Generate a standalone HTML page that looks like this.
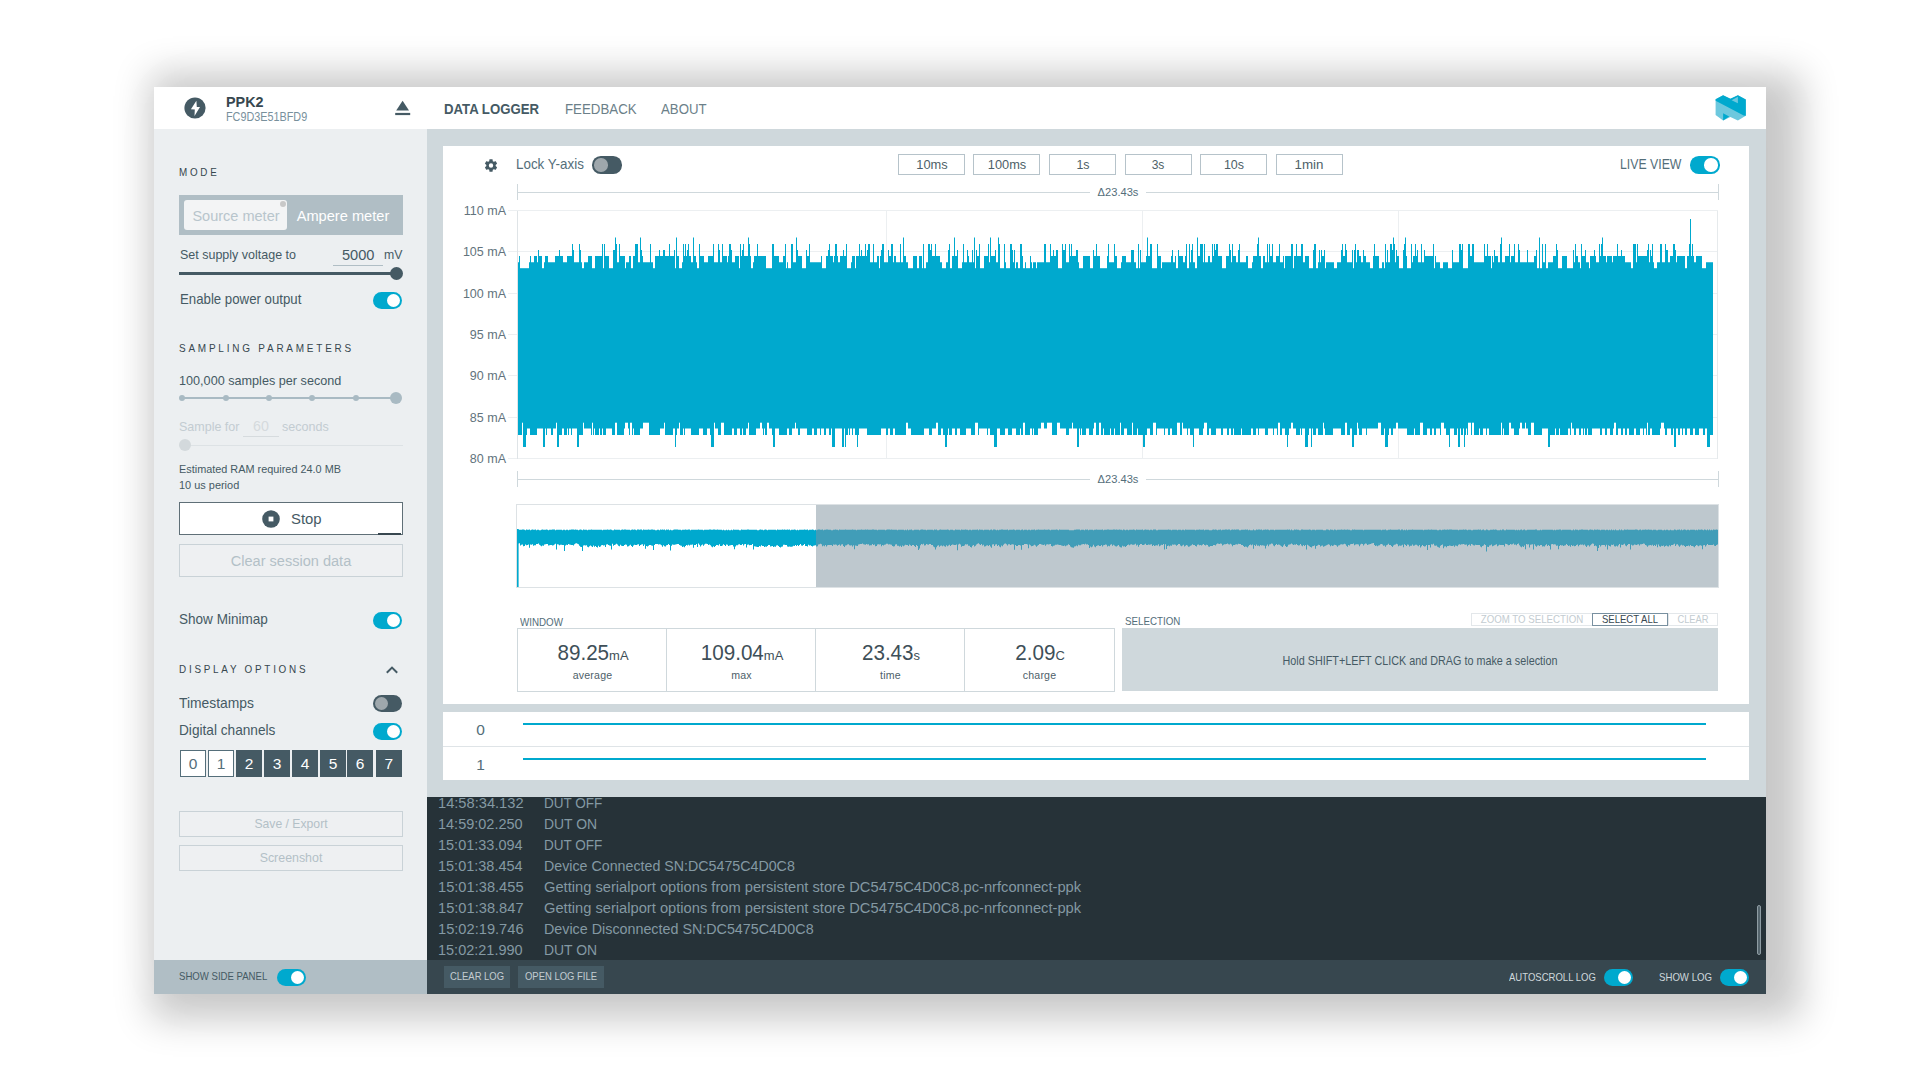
<!DOCTYPE html>
<html><head><meta charset="utf-8"><title>PPK2</title>
<style>
html,body{margin:0;padding:0;width:1920px;height:1080px;overflow:hidden;background:#ffffff;}
body{position:relative;font-family:"Liberation Sans", sans-serif;}
.a{position:absolute;}
.t{position:absolute;white-space:nowrap;}
</style></head><body>
<div class="a" style="left:154px;top:87px;width:1612px;height:907px;background:#fff;box-shadow:16px 6px 35px 20px rgba(0,0,0,0.2), 10px 0px 60px rgba(0,0,0,0.04);"></div>
<div class="a" style="left:154px;top:87px;width:1612px;height:42px;background:#ffffff;"></div>
<div class="a" style="left:154px;top:129px;width:273px;height:831px;background:#eceff1;"></div>
<div class="a" style="left:154px;top:960px;width:273px;height:34px;background:#b0bec5;"></div>
<div class="a" style="left:427px;top:129px;width:1339px;height:668px;background:#cfd8dc;"></div>
<div class="a" style="left:443px;top:146px;width:1306px;height:558px;background:#ffffff;"></div>
<div class="a" style="left:443px;top:712px;width:1306px;height:68px;background:#ffffff;"></div>
<div class="a" style="left:427px;top:797px;width:1339px;height:163px;background:#263238;"></div>
<div class="a" style="left:427px;top:960px;width:1339px;height:34px;background:#37474f;"></div>
<svg class="a" style="left:184px;top:97px" width="22" height="22" viewBox="0 0 22 22">
<circle cx="11" cy="11" r="10.6" fill="#455a64"/>
<path d="M12.4 3.8 L6.9 12.2 L10.8 12.5 L10.5 19 L16 10 L12.8 10 Z" fill="#fff"/></svg>
<div class="t" style="left:226px;top:94.38px;font-size:15.5px;line-height:15.5px;color:#37474f;font-weight:700;transform:scaleX(0.9262);transform-origin:left 0;"><span id="t0" data-m="1">PPK2</span></div>
<div class="t" style="left:226px;top:110.77px;font-size:12.2px;line-height:12.2px;color:#78909c;font-weight:400;transform:scaleX(0.8879);transform-origin:left 0;"><span id="t1" data-m="1">FC9D3E51BFD9</span></div>
<svg class="a" style="left:395px;top:100px" width="16" height="16" viewBox="0 0 16 16">
<path d="M1.2 10.4 L7.6 0.8 L14 10.4 Z" fill="#455a64"/><rect x="0.2" y="12.9" width="15" height="2.2" fill="#455a64"/></svg>
<div class="t" style="left:444.2px;top:101.13px;font-size:15.5px;line-height:15.5px;color:#455a64;font-weight:700;transform:scaleX(0.8511);transform-origin:left 0;"><span id="t2" data-m="1">DATA LOGGER</span></div>
<div class="t" style="left:564.7px;top:101.13px;font-size:15.5px;line-height:15.5px;color:#6c7f89;font-weight:400;transform:scaleX(0.8569);transform-origin:left 0;"><span id="t3" data-m="1">FEEDBACK</span></div>
<div class="t" style="left:661.3px;top:101.13px;font-size:15.5px;line-height:15.5px;color:#6c7f89;font-weight:400;transform:scaleX(0.8530);transform-origin:left 0;"><span id="t4" data-m="1">ABOUT</span></div>
<svg class="a" style="left:1715px;top:95px" width="32" height="27" viewBox="0 0 32 27">
<path d="M0.6 4.2 L8.1 0.2 L15.4 3.8 L22.9 0.2 L30.8 4.6 L30.8 20.8 L22.9 25.6 L15.4 22 L8.1 25.6 L0.6 20 Z" fill="#6dc8de"/>
<path d="M0.6 4.2 L8.1 0.2 L15.4 3.8 L22.9 0.2 L30.8 4.6 L30.8 20.8 L28.7 20.4 L0.6 5.8 Z" fill="#00a9ce"/>
<path d="M16.6 5.2 L22.9 1.8 L22.9 8.2 Z" fill="#6dc8de"/>
<path d="M8.1 18.3 L14.2 21.5 L8.1 25.5 Z" fill="#00a9ce"/>
</svg>
<div class="t" style="left:179px;top:166.76px;font-size:11.5px;line-height:11.5px;color:#37474f;font-weight:400;letter-spacing:3.2px;transform:scaleX(0.8553);transform-origin:left 0;"><span id="t5" data-m="1">MODE</span></div>
<div class="a" style="left:179px;top:195px;width:224px;height:40px;background:#b0bec5;"></div>
<div class="a" style="left:184px;top:200px;width:103px;height:30px;background:#f3f4f5;border-radius:3px;"></div>
<div class="a" style="left:280px;top:201px;width:6px;height:6px;background:#c8c8c8;border-radius:50%;"></div>
<div class="t" style="left:-364.5px;width:1200px;text-align:center;top:208.38px;font-size:15.5px;line-height:15.5px;color:#b8c5cc;font-weight:400;transform:scaleX(0.9367);transform-origin:center 0;"><span id="t6" data-m="1">Source meter</span></div>
<div class="t" style="left:-257.25px;width:1200px;text-align:center;top:208.38px;font-size:15.5px;line-height:15.5px;color:#ffffff;font-weight:400;transform:scaleX(0.9435);transform-origin:center 0;"><span id="t7" data-m="1">Ampere meter</span></div>
<div class="t" style="left:179.6px;top:248.24px;font-size:13.3px;line-height:13.3px;color:#455a64;font-weight:400;transform:scaleX(0.9395);transform-origin:left 0;"><span id="t8" data-m="1">Set supply voltage to</span></div>
<div class="t" style="left:342px;top:246.55px;font-size:15.3px;line-height:15.3px;color:#455a64;font-weight:400;transform:scaleX(0.9546);transform-origin:left 0;"><span id="t9" data-m="1">5000</span></div>
<div class="a" style="left:333px;top:265px;width:50px;height:1px;background:#b0bec5;"></div>
<div class="t" style="left:383.7px;top:248.24px;font-size:13.3px;line-height:13.3px;color:#455a64;font-weight:400;transform:scaleX(0.9215);transform-origin:left 0;"><span id="t10" data-m="1">mV</span></div>
<div class="a" style="left:179px;top:272px;width:218px;height:3px;background:#455a64;"></div>
<div class="a" style="left:390px;top:267px;width:13px;height:13px;background:#455a64;border-radius:50%;"></div>
<div class="t" style="left:180px;top:291.10px;font-size:15px;line-height:15px;color:#455a64;font-weight:400;transform:scaleX(0.8819);transform-origin:left 0;"><span id="t11" data-m="1">Enable power output</span></div>
<div class="a" style="left:373px;top:292px;width:29px;height:17px;background:#00a9ce;border-radius:8.5px;"></div>
<div class="a" style="left:387.0px;top:294px;width:13.0px;height:13.0px;background:#ffffff;border-radius:50%;"></div>
<div class="t" style="left:179px;top:343.26px;font-size:11.5px;line-height:11.5px;color:#37474f;font-weight:400;letter-spacing:3.2px;transform:scaleX(0.8671);transform-origin:left 0;"><span id="t12" data-m="1">SAMPLING PARAMETERS</span></div>
<div class="t" style="left:179px;top:373.54px;font-size:13.3px;line-height:13.3px;color:#455a64;font-weight:400;transform:scaleX(0.9506);transform-origin:left 0;"><span id="t13" data-m="1">100,000 samples per second</span></div>
<div class="a" style="left:182px;top:397px;width:214px;height:2px;background:#a9bac3;"></div>
<div class="a" style="left:179.3px;top:395px;width:6px;height:6px;background:#a9bac3;border-radius:50%;"></div>
<div class="a" style="left:222.7px;top:395px;width:6px;height:6px;background:#a9bac3;border-radius:50%;"></div>
<div class="a" style="left:266px;top:395px;width:6px;height:6px;background:#a9bac3;border-radius:50%;"></div>
<div class="a" style="left:309.3px;top:395px;width:6px;height:6px;background:#a9bac3;border-radius:50%;"></div>
<div class="a" style="left:352.7px;top:395px;width:6px;height:6px;background:#a9bac3;border-radius:50%;"></div>
<div class="a" style="left:390px;top:392px;width:12px;height:12px;background:#a9bac3;border-radius:50%;"></div>
<div class="t" style="left:179px;top:419.54px;font-size:13.3px;line-height:13.3px;color:#c3ccd1;font-weight:400;transform:scaleX(0.9404);transform-origin:left 0;"><span id="t14" data-m="1">Sample for</span></div>
<div class="t" style="left:-338.75px;width:1200px;text-align:center;top:418.10px;font-size:15px;line-height:15px;color:#d5dadd;font-weight:400;transform:scaleX(0.9485);transform-origin:center 0;"><span id="t15" data-m="1">60</span></div>
<div class="a" style="left:243px;top:436px;width:36px;height:1px;background:#d6dbde;"></div>
<div class="t" style="left:282px;top:419.54px;font-size:13.3px;line-height:13.3px;color:#c3ccd1;font-weight:400;transform:scaleX(0.9423);transform-origin:left 0;"><span id="t16" data-m="1">seconds</span></div>
<div class="a" style="left:179px;top:445px;width:224px;height:1px;background:#dde2e5;"></div>
<div class="a" style="left:179px;top:439px;width:12px;height:12px;background:#d3d9dc;border-radius:50%;"></div>
<div class="t" style="left:179px;top:464.02px;font-size:11.2px;line-height:11.2px;color:#455a64;font-weight:400;transform:scaleX(0.9719);transform-origin:left 0;"><span id="t17" data-m="1">Estimated RAM required 24.0 MB</span></div>
<div class="t" style="left:179px;top:480.02px;font-size:11.2px;line-height:11.2px;color:#455a64;font-weight:400;transform:scaleX(0.9779);transform-origin:left 0;"><span id="t18" data-m="1">10 us period</span></div>
<div class="a" style="left:179px;top:502px;width:224px;height:33px;background:#ffffff;border:1px solid #5f6f77;box-sizing:border-box;"></div>
<div class="a" style="left:378px;top:533px;width:23px;height:2px;background:#37474f;"></div>
<svg class="a" style="left:262px;top:510px" width="18" height="18" viewBox="0 0 18 18">
<circle cx="9" cy="9" r="8.8" fill="#455a64"/><rect x="6.6" y="6.6" width="4.8" height="4.8" fill="#fff"/></svg>
<div class="t" style="left:290.7px;top:511.38px;font-size:15.5px;line-height:15.5px;color:#455a64;font-weight:400;transform:scaleX(0.9595);transform-origin:left 0;"><span id="t19" data-m="1">Stop</span></div>
<div class="a" style="left:179px;top:544px;width:224px;height:33px;background:#eef0f2;border:1px solid #c9d2d7;box-sizing:border-box;"></div>
<div class="t" style="left:-309px;width:1200px;text-align:center;top:553.05px;font-size:15.3px;line-height:15.3px;color:#b3c0c7;font-weight:400;transform:scaleX(0.9514);transform-origin:center 0;"><span id="t20" data-m="1">Clear session data</span></div>
<div class="t" style="left:179px;top:611.30px;font-size:15px;line-height:15px;color:#455a64;font-weight:400;transform:scaleX(0.9028);transform-origin:left 0;"><span id="t21" data-m="1">Show Minimap</span></div>
<div class="a" style="left:373px;top:612px;width:29px;height:17px;background:#00a9ce;border-radius:8.5px;"></div>
<div class="a" style="left:387.0px;top:614px;width:13.0px;height:13.0px;background:#ffffff;border-radius:50%;"></div>
<div class="t" style="left:179px;top:663.76px;font-size:11.5px;line-height:11.5px;color:#37474f;font-weight:400;letter-spacing:3.2px;transform:scaleX(0.8592);transform-origin:left 0;"><span id="t22" data-m="1">DISPLAY OPTIONS</span></div>
<svg class="a" style="left:385px;top:664px" width="14" height="12" viewBox="0 0 14 12">
<path d="M1.8 8.8 L7 3.6 L12.2 8.8" fill="none" stroke="#455a64" stroke-width="2"/></svg>
<div class="t" style="left:179px;top:695.00px;font-size:15px;line-height:15px;color:#455a64;font-weight:400;transform:scaleX(0.9241);transform-origin:left 0;"><span id="t23" data-m="1">Timestamps</span></div>
<div class="a" style="left:373px;top:695px;width:29px;height:17px;background:#455a64;border-radius:8.5px;"></div>
<div class="a" style="left:375px;top:697px;width:13.0px;height:13.0px;background:#9ea7ac;border-radius:50%;"></div>
<div class="t" style="left:179px;top:722.40px;font-size:15px;line-height:15px;color:#455a64;font-weight:400;transform:scaleX(0.9100);transform-origin:left 0;"><span id="t24" data-m="1">Digital channels</span></div>
<div class="a" style="left:373px;top:723px;width:29px;height:17px;background:#00a9ce;border-radius:8.5px;"></div>
<div class="a" style="left:387.0px;top:725px;width:13.0px;height:13.0px;background:#ffffff;border-radius:50%;"></div>
<div class="a" style="left:180px;top:750px;width:26px;height:27px;background:#ffffff;border:1px solid #546e7a;box-sizing:border-box;"></div>
<div class="t" style="left:-407px;width:1200px;text-align:center;top:755.78px;font-size:15.5px;line-height:15.5px;color:#546e7a;font-weight:400;"><span id="t25">0</span></div>
<div class="a" style="left:208px;top:750px;width:26px;height:27px;background:#ffffff;border:1px solid #546e7a;box-sizing:border-box;"></div>
<div class="t" style="left:-379px;width:1200px;text-align:center;top:755.78px;font-size:15.5px;line-height:15.5px;color:#546e7a;font-weight:400;"><span id="t26">1</span></div>
<div class="a" style="left:236px;top:750px;width:26px;height:27px;background:#455a64;"></div>
<div class="t" style="left:-351px;width:1200px;text-align:center;top:755.78px;font-size:15.5px;line-height:15.5px;color:#ffffff;font-weight:400;"><span id="t27">2</span></div>
<div class="a" style="left:264px;top:750px;width:26px;height:27px;background:#455a64;"></div>
<div class="t" style="left:-323px;width:1200px;text-align:center;top:755.78px;font-size:15.5px;line-height:15.5px;color:#ffffff;font-weight:400;"><span id="t28">3</span></div>
<div class="a" style="left:292px;top:750px;width:26px;height:27px;background:#455a64;"></div>
<div class="t" style="left:-295px;width:1200px;text-align:center;top:755.78px;font-size:15.5px;line-height:15.5px;color:#ffffff;font-weight:400;"><span id="t29">4</span></div>
<div class="a" style="left:320px;top:750px;width:26px;height:27px;background:#455a64;"></div>
<div class="t" style="left:-267px;width:1200px;text-align:center;top:755.78px;font-size:15.5px;line-height:15.5px;color:#ffffff;font-weight:400;"><span id="t30">5</span></div>
<div class="a" style="left:347px;top:750px;width:26px;height:27px;background:#455a64;"></div>
<div class="t" style="left:-240px;width:1200px;text-align:center;top:755.78px;font-size:15.5px;line-height:15.5px;color:#ffffff;font-weight:400;"><span id="t31">6</span></div>
<div class="a" style="left:375.7px;top:750px;width:26px;height:27px;background:#455a64;"></div>
<div class="t" style="left:-211.3px;width:1200px;text-align:center;top:755.78px;font-size:15.5px;line-height:15.5px;color:#ffffff;font-weight:400;"><span id="t32">7</span></div>
<div class="a" style="left:179px;top:811px;width:224px;height:26px;background:#eef0f2;border:1px solid #c9d2d7;box-sizing:border-box;"></div>
<div class="t" style="left:-309px;width:1200px;text-align:center;top:817.44px;font-size:13.3px;line-height:13.3px;color:#b3c0c7;font-weight:400;transform:scaleX(0.9173);transform-origin:center 0;"><span id="t33" data-m="1">Save / Export</span></div>
<div class="a" style="left:179px;top:845px;width:224px;height:26px;background:#eef0f2;border:1px solid #c9d2d7;box-sizing:border-box;"></div>
<div class="t" style="left:-309px;width:1200px;text-align:center;top:850.74px;font-size:13.3px;line-height:13.3px;color:#b3c0c7;font-weight:400;transform:scaleX(0.9324);transform-origin:center 0;"><span id="t34" data-m="1">Screenshot</span></div>
<div class="t" style="left:179.4px;top:971.43px;font-size:11.3px;line-height:11.3px;color:#455a64;font-weight:400;transform:scaleX(0.8485);transform-origin:left 0;"><span id="t35" data-m="1">SHOW SIDE PANEL</span></div>
<div class="a" style="left:277px;top:969px;width:29px;height:17px;background:#00a9ce;border-radius:8.5px;"></div>
<div class="a" style="left:291.0px;top:971px;width:13.0px;height:13.0px;background:#ffffff;border-radius:50%;"></div>
<svg class="a" style="left:483px;top:158px" width="16" height="15" viewBox="0 0 24 24">
<path fill="#455a64" d="M12,15.5A3.5,3.5 0 0,1 8.5,12A3.5,3.5 0 0,1 12,8.5A3.5,3.5 0 0,1 15.5,12A3.5,3.5 0 0,1 12,15.5M19.43,12.97C19.47,12.65 19.5,12.33 19.5,12C19.5,11.67 19.47,11.34 19.43,11L21.54,9.37C21.73,9.22 21.78,8.95 21.66,8.73L19.66,5.27C19.54,5.05 19.27,4.96 19.05,5.05L16.56,6.05C16.04,5.66 15.5,5.32 14.87,5.07L14.5,2.42C14.46,2.18 14.25,2 14,2H10C9.75,2 9.54,2.18 9.5,2.42L9.13,5.07C8.5,5.32 7.96,5.66 7.44,6.05L4.95,5.05C4.73,4.96 4.46,5.05 4.34,5.27L2.34,8.73C2.21,8.95 2.27,9.22 2.46,9.37L4.57,11C4.53,11.34 4.5,11.67 4.5,12C4.5,12.33 4.53,12.65 4.57,12.97L2.46,14.63C2.27,14.78 2.21,15.05 2.34,15.27L4.34,18.73C4.46,18.95 4.73,19.03 4.95,18.95L7.44,17.94C7.96,18.34 8.5,18.68 9.13,18.93L9.5,21.58C9.54,21.82 9.75,22 10,22H14C14.25,22 14.46,21.82 14.5,21.58L14.87,18.93C15.5,18.67 16.04,18.34 16.56,17.94L19.05,18.95C19.27,19.03 19.54,18.95 19.66,18.73L21.66,15.27C21.78,15.05 21.73,14.78 21.54,14.63L19.43,12.97Z"/></svg>
<div class="t" style="left:516px;top:157.09px;font-size:14.3px;line-height:14.3px;color:#546e7a;font-weight:400;transform:scaleX(0.9380);transform-origin:left 0;"><span id="t36" data-m="1">Lock Y-axis</span></div>
<div class="a" style="left:592px;top:156px;width:30px;height:17.5px;background:#455a64;border-radius:8.75px;"></div>
<div class="a" style="left:594px;top:158px;width:13.5px;height:13.5px;background:#9ea7ac;border-radius:50%;"></div>
<div class="a" style="left:898px;top:154px;width:67px;height:21px;background:#ffffff;border:1px solid #b6c3ca;box-sizing:border-box;"></div>
<div class="t" style="left:331.5px;width:1200px;text-align:center;top:158.24px;font-size:13.3px;line-height:13.3px;color:#4e5f68;font-weight:400;transform:scaleX(0.9650);transform-origin:center 0;"><span id="t37" data-m="1">10ms</span></div>
<div class="a" style="left:973px;top:154px;width:67px;height:21px;background:#ffffff;border:1px solid #b6c3ca;box-sizing:border-box;"></div>
<div class="t" style="left:406.5px;width:1200px;text-align:center;top:158.24px;font-size:13.3px;line-height:13.3px;color:#4e5f68;font-weight:400;transform:scaleX(0.9615);transform-origin:center 0;"><span id="t38" data-m="1">100ms</span></div>
<div class="a" style="left:1049px;top:154px;width:67px;height:21px;background:#ffffff;border:1px solid #b6c3ca;box-sizing:border-box;"></div>
<div class="t" style="left:482.5px;width:1200px;text-align:center;top:158.24px;font-size:13.3px;line-height:13.3px;color:#4e5f68;font-weight:400;transform:scaleX(0.9332);transform-origin:center 0;"><span id="t39" data-m="1">1s</span></div>
<div class="a" style="left:1124.5px;top:154px;width:67px;height:21px;background:#ffffff;border:1px solid #b6c3ca;box-sizing:border-box;"></div>
<div class="t" style="left:558.0px;width:1200px;text-align:center;top:158.24px;font-size:13.3px;line-height:13.3px;color:#4e5f68;font-weight:400;transform:scaleX(0.9031);transform-origin:center 0;"><span id="t40" data-m="1">3s</span></div>
<div class="a" style="left:1200px;top:154px;width:67px;height:21px;background:#ffffff;border:1px solid #b6c3ca;box-sizing:border-box;"></div>
<div class="t" style="left:633.5px;width:1200px;text-align:center;top:158.24px;font-size:13.3px;line-height:13.3px;color:#4e5f68;font-weight:400;transform:scaleX(0.9379);transform-origin:center 0;"><span id="t41" data-m="1">10s</span></div>
<div class="a" style="left:1275.5px;top:154px;width:67px;height:21px;background:#ffffff;border:1px solid #b6c3ca;box-sizing:border-box;"></div>
<div class="t" style="left:709.0px;width:1200px;text-align:center;top:158.24px;font-size:13.3px;line-height:13.3px;color:#4e5f68;font-weight:400;transform:scaleX(1.0027);transform-origin:center 0;"><span id="t42" data-m="1">1min</span></div>
<div class="t" style="left:1620px;top:157.09px;font-size:14.3px;line-height:14.3px;color:#546e7a;font-weight:400;transform:scaleX(0.8590);transform-origin:left 0;"><span id="t43" data-m="1">LIVE VIEW</span></div>
<div class="a" style="left:1689.5px;top:156px;width:30px;height:17.5px;background:#00a9ce;border-radius:8.75px;"></div>
<div class="a" style="left:1704.0px;top:158px;width:13.5px;height:13.5px;background:#ffffff;border-radius:50%;"></div>
<div class="a" style="left:518px;top:192px;width:1200px;height:1px;background:#cfd8dc;"></div>
<div class="a" style="left:517px;top:184px;width:1px;height:16px;background:#cfd8dc;"></div>
<div class="a" style="left:1718px;top:184px;width:1px;height:16px;background:#cfd8dc;"></div>
<div class="a" style="left:1090px;top:186px;width:56px;height:12px;background:#ffffff;"></div>
<div class="t" style="left:517.5px;width:1200px;text-align:center;top:186.76px;font-size:11.5px;line-height:11.5px;color:#546e7a;font-weight:400;transform:scaleX(0.9656);transform-origin:center 0;"><span id="t44" data-m="1">&#916;23.43s</span></div>
<div class="a" style="left:518px;top:479px;width:1200px;height:1px;background:#cfd8dc;"></div>
<div class="a" style="left:517px;top:471px;width:1px;height:16px;background:#cfd8dc;"></div>
<div class="a" style="left:1718px;top:471px;width:1px;height:16px;background:#cfd8dc;"></div>
<div class="a" style="left:1090px;top:473px;width:56px;height:12px;background:#ffffff;"></div>
<div class="t" style="left:517.5px;width:1200px;text-align:center;top:474.26px;font-size:11.5px;line-height:11.5px;color:#546e7a;font-weight:400;transform:scaleX(0.9656);transform-origin:center 0;"><span id="t45" data-m="1">&#916;23.43s</span></div>
<div class="a" style="left:508px;top:210px;width:1210px;height:1px;background:#eceff1;"></div>
<div class="t" style="left:-694.5px;width:1200px;text-align:right;top:203.64px;font-size:13.3px;line-height:13.3px;color:#62737c;font-weight:400;transform:scaleX(0.94);transform-origin:right 0;"><span id="t46">110 mA</span></div>
<div class="a" style="left:508px;top:251px;width:1210px;height:1px;background:#eceff1;"></div>
<div class="t" style="left:-694.5px;width:1200px;text-align:right;top:244.64px;font-size:13.3px;line-height:13.3px;color:#62737c;font-weight:400;transform:scaleX(0.94);transform-origin:right 0;"><span id="t47">105 mA</span></div>
<div class="a" style="left:508px;top:293px;width:1210px;height:1px;background:#eceff1;"></div>
<div class="t" style="left:-694.5px;width:1200px;text-align:right;top:286.64px;font-size:13.3px;line-height:13.3px;color:#62737c;font-weight:400;transform:scaleX(0.94);transform-origin:right 0;"><span id="t48">100 mA</span></div>
<div class="a" style="left:508px;top:334px;width:1210px;height:1px;background:#eceff1;"></div>
<div class="t" style="left:-694.5px;width:1200px;text-align:right;top:327.64px;font-size:13.3px;line-height:13.3px;color:#62737c;font-weight:400;transform:scaleX(0.94);transform-origin:right 0;"><span id="t49">95 mA</span></div>
<div class="a" style="left:508px;top:375px;width:1210px;height:1px;background:#eceff1;"></div>
<div class="t" style="left:-694.5px;width:1200px;text-align:right;top:368.64px;font-size:13.3px;line-height:13.3px;color:#62737c;font-weight:400;transform:scaleX(0.94);transform-origin:right 0;"><span id="t50">90 mA</span></div>
<div class="a" style="left:508px;top:417px;width:1210px;height:1px;background:#eceff1;"></div>
<div class="t" style="left:-694.5px;width:1200px;text-align:right;top:410.64px;font-size:13.3px;line-height:13.3px;color:#62737c;font-weight:400;transform:scaleX(0.94);transform-origin:right 0;"><span id="t51">85 mA</span></div>
<div class="a" style="left:508px;top:458px;width:1210px;height:1px;background:#eceff1;"></div>
<div class="t" style="left:-694.5px;width:1200px;text-align:right;top:451.64px;font-size:13.3px;line-height:13.3px;color:#62737c;font-weight:400;transform:scaleX(0.94);transform-origin:right 0;"><span id="t52">80 mA</span></div>
<div class="a" style="left:886px;top:211px;width:1px;height:248px;background:#eceff1;"></div>
<div class="a" style="left:1142px;top:211px;width:1px;height:248px;background:#eceff1;"></div>
<div class="a" style="left:1398px;top:211px;width:1px;height:248px;background:#eceff1;"></div>
<div class="a" style="left:517px;top:211px;width:1px;height:248px;background:#dfe4e7;"></div>
<div class="a" style="left:1717px;top:211px;width:1px;height:248px;background:#e6eaec;"></div>
<svg class="a" style="left:0;top:0" width="1920" height="1080"><rect x="518" y="268.4" width="1195" height="154" fill="#00a9ce"/><path fill="#00a9ce" d="M518 262.2V434.9h1V262.2zM519 256.1V434.9h1V256.1zM520 268.4V434.9h1V268.4zM521 268.4V434.9h1V268.4zM522 268.4V422.4h1V268.4zM523 268.4V446.9h1V268.4zM524 268.4V446.9h1V268.4zM525 268.4V446.9h1V268.4zM526 268.4V434.9h1V268.4zM527 268.4V428.6h1V268.4zM528 268.4V428.6h1V268.4zM529 262.2V428.6h1V262.2zM530 256.1V434.9h1V256.1zM531 262.2V434.9h1V262.2zM532 262.2V434.9h1V262.2zM533 262.2V434.9h1V262.2zM534 256.1V434.9h1V256.1zM535 256.1V434.9h1V256.1zM536 256.1V434.9h1V256.1zM537 262.2V428.6h1V262.2zM538 250.1V428.6h1V250.1zM539 256.1V428.6h1V256.1zM540 256.1V428.6h1V256.1zM541 256.1V428.6h1V256.1zM542 268.4V428.6h1V268.4zM543 268.4V446.9h1V268.4zM544 262.2V446.9h1V262.2zM545 256.1V428.6h1V256.1zM546 256.1V434.9h1V256.1zM547 256.1V428.6h1V256.1zM548 262.2V428.6h1V262.2zM549 262.2V428.6h1V262.2zM550 262.2V428.6h1V262.2zM551 262.2V434.9h1V262.2zM552 262.2V434.9h1V262.2zM553 262.2V428.6h1V262.2zM554 262.2V428.6h1V262.2zM555 256.1V428.6h1V256.1zM556 256.1V422.4h1V256.1zM557 256.1V446.9h1V256.1zM558 256.1V446.9h1V256.1zM559 250.1V434.9h1V250.1zM560 256.1V434.9h1V256.1zM561 256.1V434.9h1V256.1zM562 256.1V428.6h1V256.1zM563 262.2V428.6h1V262.2zM564 262.2V434.9h1V262.2zM565 262.2V434.9h1V262.2zM566 262.2V434.9h1V262.2zM567 256.1V428.6h1V256.1zM568 256.1V434.9h1V256.1zM569 256.1V428.6h1V256.1zM570 256.1V428.6h1V256.1zM571 256.1V434.9h1V256.1zM572 244.0V428.6h1V244.0zM573 250.1V428.6h1V250.1zM574 262.2V428.6h1V262.2zM575 262.2V428.6h1V262.2zM576 262.2V428.6h1V262.2zM577 262.2V446.9h1V262.2zM578 262.2V446.9h1V262.2zM579 244.0V434.9h1V244.0zM580 250.1V434.9h1V250.1zM581 262.2V434.9h1V262.2zM582 268.4V434.9h1V268.4zM583 268.4V422.4h1V268.4zM584 262.2V428.6h1V262.2zM585 262.2V428.6h1V262.2zM586 262.2V428.6h1V262.2zM587 262.2V428.6h1V262.2zM588 256.1V428.6h1V256.1zM589 256.1V428.6h1V256.1zM590 256.1V428.6h1V256.1zM591 256.1V434.9h1V256.1zM592 268.4V422.4h1V268.4zM593 268.4V434.9h1V268.4zM594 268.4V428.6h1V268.4zM595 256.1V434.9h1V256.1zM596 256.1V434.9h1V256.1zM597 256.1V434.9h1V256.1zM598 256.1V434.9h1V256.1zM599 256.1V428.6h1V256.1zM600 256.1V434.9h1V256.1zM601 256.1V434.9h1V256.1zM602 244.0V428.6h1V244.0zM603 268.4V434.9h1V268.4zM604 244.0V434.9h1V244.0zM605 256.1V434.9h1V256.1zM606 256.1V428.6h1V256.1zM607 256.1V428.6h1V256.1zM608 256.1V428.6h1V256.1zM609 268.4V428.6h1V268.4zM610 268.4V428.6h1V268.4zM611 268.4V428.6h1V268.4zM612 268.4V434.9h1V268.4zM613 250.1V434.9h1V250.1zM614 250.1V434.9h1V250.1zM615 237.5V422.4h1V237.5zM616 244.0V422.4h1V244.0zM617 262.2V434.9h1V262.2zM618 262.2V434.9h1V262.2zM619 244.0V434.9h1V244.0zM620 256.1V434.9h1V256.1zM621 256.1V434.9h1V256.1zM622 256.1V434.9h1V256.1zM623 256.1V434.9h1V256.1zM624 256.1V428.6h1V256.1zM625 268.4V422.4h1V268.4zM626 262.2V422.4h1V262.2zM627 262.2V422.4h1V262.2zM628 262.2V428.6h1V262.2zM629 256.1V434.9h1V256.1zM630 256.1V422.4h1V256.1zM631 268.4V422.4h1V268.4zM632 268.4V434.9h1V268.4zM633 256.1V428.6h1V256.1zM634 256.1V434.9h1V256.1zM635 244.0V434.9h1V244.0zM636 244.0V434.9h1V244.0zM637 244.0V434.9h1V244.0zM638 262.2V434.9h1V262.2zM639 262.2V434.9h1V262.2zM640 237.5V428.6h1V237.5zM641 250.1V428.6h1V250.1zM642 256.1V428.6h1V256.1zM643 262.2V422.4h1V262.2zM644 262.2V422.4h1V262.2zM645 262.2V422.4h1V262.2zM646 262.2V422.4h1V262.2zM647 262.2V422.4h1V262.2zM648 262.2V422.4h1V262.2zM649 262.2V434.9h1V262.2zM650 244.0V434.9h1V244.0zM651 262.2V434.9h1V262.2zM652 262.2V434.9h1V262.2zM653 268.4V434.9h1V268.4zM654 268.4V434.9h1V268.4zM655 256.1V434.9h1V256.1zM656 256.1V434.9h1V256.1zM657 256.1V434.9h1V256.1zM658 256.1V434.9h1V256.1zM659 250.1V434.9h1V250.1zM660 256.1V428.6h1V256.1zM661 256.1V428.6h1V256.1zM662 256.1V428.6h1V256.1zM663 250.1V428.6h1V250.1zM664 250.1V422.4h1V250.1zM665 256.1V434.9h1V256.1zM666 256.1V434.9h1V256.1zM667 256.1V434.9h1V256.1zM668 256.1V434.9h1V256.1zM669 244.0V434.9h1V244.0zM670 256.1V434.9h1V256.1zM671 256.1V434.9h1V256.1zM672 256.1V434.9h1V256.1zM673 256.1V428.6h1V256.1zM674 250.1V428.6h1V250.1zM675 268.4V446.9h1V268.4zM676 237.5V434.9h1V237.5zM677 256.1V428.6h1V256.1zM678 256.1V428.6h1V256.1zM679 268.4V422.4h1V268.4zM680 268.4V434.9h1V268.4zM681 268.4V434.9h1V268.4zM682 262.2V434.9h1V262.2zM683 244.0V428.6h1V244.0zM684 256.1V434.9h1V256.1zM685 244.0V428.6h1V244.0zM686 256.1V428.6h1V256.1zM687 250.1V428.6h1V250.1zM688 244.0V428.6h1V244.0zM689 256.1V428.6h1V256.1zM690 256.1V428.6h1V256.1zM691 262.2V434.9h1V262.2zM692 262.2V434.9h1V262.2zM693 237.5V434.9h1V237.5zM694 256.1V434.9h1V256.1zM695 256.1V434.9h1V256.1zM696 262.2V434.9h1V262.2zM697 268.4V434.9h1V268.4zM698 268.4V434.9h1V268.4zM699 244.0V428.6h1V244.0zM700 256.1V428.6h1V256.1zM701 256.1V428.6h1V256.1zM702 256.1V428.6h1V256.1zM703 256.1V434.9h1V256.1zM704 262.2V434.9h1V262.2zM705 262.2V434.9h1V262.2zM706 262.2V434.9h1V262.2zM707 262.2V428.6h1V262.2zM708 256.1V428.6h1V256.1zM709 256.1V428.6h1V256.1zM710 256.1V434.9h1V256.1zM711 256.1V446.9h1V256.1zM712 256.1V446.9h1V256.1zM713 244.0V446.9h1V244.0zM714 262.2V422.4h1V262.2zM715 262.2V428.6h1V262.2zM716 262.2V428.6h1V262.2zM717 262.2V428.6h1V262.2zM718 244.0V434.9h1V244.0zM719 250.1V434.9h1V250.1zM720 262.2V434.9h1V262.2zM721 262.2V422.4h1V262.2zM722 244.0V422.4h1V244.0zM723 256.1V422.4h1V256.1zM724 256.1V434.9h1V256.1zM725 256.1V434.9h1V256.1zM726 256.1V434.9h1V256.1zM727 262.2V434.9h1V262.2zM728 256.1V434.9h1V256.1zM729 244.0V434.9h1V244.0zM730 244.0V434.9h1V244.0zM731 250.1V434.9h1V250.1zM732 262.2V428.6h1V262.2zM733 262.2V428.6h1V262.2zM734 262.2V434.9h1V262.2zM735 256.1V434.9h1V256.1zM736 256.1V434.9h1V256.1zM737 256.1V428.6h1V256.1zM738 256.1V428.6h1V256.1zM739 268.4V428.6h1V268.4zM740 244.0V434.9h1V244.0zM741 256.1V434.9h1V256.1zM742 250.1V428.6h1V250.1zM743 244.0V434.9h1V244.0zM744 256.1V434.9h1V256.1zM745 256.1V434.9h1V256.1zM746 256.1V428.6h1V256.1zM747 256.1V428.6h1V256.1zM748 237.5V422.4h1V237.5zM749 244.0V434.9h1V244.0zM750 256.1V434.9h1V256.1zM751 268.4V434.9h1V268.4zM752 268.4V434.9h1V268.4zM753 262.2V434.9h1V262.2zM754 256.1V434.9h1V256.1zM755 256.1V434.9h1V256.1zM756 256.1V428.6h1V256.1zM757 244.0V428.6h1V244.0zM758 256.1V428.6h1V256.1zM759 256.1V428.6h1V256.1zM760 256.1V422.4h1V256.1zM761 256.1V422.4h1V256.1zM762 256.1V428.6h1V256.1zM763 256.1V434.9h1V256.1zM764 256.1V428.6h1V256.1zM765 256.1V434.9h1V256.1zM766 268.4V434.9h1V268.4zM767 268.4V422.4h1V268.4zM768 268.4V422.4h1V268.4zM769 268.4V428.6h1V268.4zM770 268.4V428.6h1V268.4zM771 268.4V428.6h1V268.4zM772 244.0V434.9h1V244.0zM773 244.0V446.9h1V244.0zM774 256.1V446.9h1V256.1zM775 256.1V428.6h1V256.1zM776 256.1V428.6h1V256.1zM777 256.1V428.6h1V256.1zM778 256.1V428.6h1V256.1zM779 262.2V434.9h1V262.2zM780 262.2V434.9h1V262.2zM781 262.2V434.9h1V262.2zM782 262.2V434.9h1V262.2zM783 256.1V434.9h1V256.1zM784 256.1V434.9h1V256.1zM785 244.0V434.9h1V244.0zM786 268.4V434.9h1V268.4zM787 262.2V428.6h1V262.2zM788 268.4V428.6h1V268.4zM789 268.4V434.9h1V268.4zM790 268.4V434.9h1V268.4zM791 244.0V434.9h1V244.0zM792 244.0V428.6h1V244.0zM793 262.2V428.6h1V262.2zM794 262.2V428.6h1V262.2zM795 262.2V422.4h1V262.2zM796 237.5V428.6h1V237.5zM797 250.1V428.6h1V250.1zM798 256.1V434.9h1V256.1zM799 256.1V434.9h1V256.1zM800 256.1V428.6h1V256.1zM801 256.1V428.6h1V256.1zM802 268.4V428.6h1V268.4zM803 268.4V428.6h1V268.4zM804 268.4V428.6h1V268.4zM805 268.4V428.6h1V268.4zM806 250.1V428.6h1V250.1zM807 256.1V434.9h1V256.1zM808 256.1V434.9h1V256.1zM809 244.0V434.9h1V244.0zM810 262.2V434.9h1V262.2zM811 262.2V434.9h1V262.2zM812 262.2V428.6h1V262.2zM813 262.2V428.6h1V262.2zM814 262.2V434.9h1V262.2zM815 262.2V434.9h1V262.2zM816 262.2V434.9h1V262.2zM817 262.2V428.6h1V262.2zM818 262.2V428.6h1V262.2zM819 262.2V428.6h1V262.2zM820 262.2V434.9h1V262.2zM821 256.1V428.6h1V256.1zM822 268.4V428.6h1V268.4zM823 268.4V428.6h1V268.4zM824 268.4V434.9h1V268.4zM825 268.4V434.9h1V268.4zM826 256.1V428.6h1V256.1zM827 256.1V428.6h1V256.1zM828 250.1V428.6h1V250.1zM829 244.0V434.9h1V244.0zM830 256.1V434.9h1V256.1zM831 256.1V428.6h1V256.1zM832 256.1V446.9h1V256.1zM833 262.2V446.9h1V262.2zM834 256.1V446.9h1V256.1zM835 244.0V428.6h1V244.0zM836 244.0V428.6h1V244.0zM837 256.1V428.6h1V256.1zM838 262.2V428.6h1V262.2zM839 262.2V428.6h1V262.2zM840 256.1V428.6h1V256.1zM841 256.1V428.6h1V256.1zM842 256.1V446.9h1V256.1zM843 250.1V446.9h1V250.1zM844 256.1V428.6h1V256.1zM845 256.1V446.9h1V256.1zM846 244.0V434.9h1V244.0zM847 268.4V434.9h1V268.4zM848 268.4V428.6h1V268.4zM849 268.4V434.9h1V268.4zM850 268.4V428.6h1V268.4zM851 262.2V428.6h1V262.2zM852 256.1V434.9h1V256.1zM853 256.1V428.6h1V256.1zM854 256.1V428.6h1V256.1zM855 268.4V434.9h1V268.4zM856 256.1V434.9h1V256.1zM857 256.1V446.9h1V256.1zM858 256.1V434.9h1V256.1zM859 244.0V428.6h1V244.0zM860 256.1V428.6h1V256.1zM861 250.1V428.6h1V250.1zM862 256.1V428.6h1V256.1zM863 256.1V428.6h1V256.1zM864 256.1V428.6h1V256.1zM865 244.0V428.6h1V244.0zM866 256.1V428.6h1V256.1zM867 250.1V434.9h1V250.1zM868 244.0V434.9h1V244.0zM869 244.0V434.9h1V244.0zM870 262.2V434.9h1V262.2zM871 262.2V434.9h1V262.2zM872 262.2V434.9h1V262.2zM873 244.0V434.9h1V244.0zM874 262.2V434.9h1V262.2zM875 262.2V434.9h1V262.2zM876 262.2V434.9h1V262.2zM877 256.1V434.9h1V256.1zM878 256.1V434.9h1V256.1zM879 268.4V434.9h1V268.4zM880 256.1V434.9h1V256.1zM881 250.1V428.6h1V250.1zM882 244.0V428.6h1V244.0zM883 244.0V428.6h1V244.0zM884 262.2V428.6h1V262.2zM885 262.2V428.6h1V262.2zM886 262.2V434.9h1V262.2zM887 262.2V434.9h1V262.2zM888 250.1V428.6h1V250.1zM889 256.1V428.6h1V256.1zM890 256.1V434.9h1V256.1zM891 244.0V434.9h1V244.0zM892 244.0V434.9h1V244.0zM893 262.2V428.6h1V262.2zM894 256.1V428.6h1V256.1zM895 256.1V434.9h1V256.1zM896 262.2V434.9h1V262.2zM897 262.2V434.9h1V262.2zM898 262.2V434.9h1V262.2zM899 262.2V434.9h1V262.2zM900 244.0V434.9h1V244.0zM901 262.2V434.9h1V262.2zM902 262.2V434.9h1V262.2zM903 237.5V434.9h1V237.5zM904 256.1V434.9h1V256.1zM905 256.1V434.9h1V256.1zM906 262.2V422.4h1V262.2zM907 262.2V422.4h1V262.2zM908 268.4V428.6h1V268.4zM909 268.4V428.6h1V268.4zM910 268.4V428.6h1V268.4zM911 268.4V434.9h1V268.4zM912 268.4V434.9h1V268.4zM913 256.1V434.9h1V256.1zM914 256.1V434.9h1V256.1zM915 256.1V434.9h1V256.1zM916 256.1V434.9h1V256.1zM917 268.4V434.9h1V268.4zM918 268.4V434.9h1V268.4zM919 256.1V434.9h1V256.1zM920 256.1V434.9h1V256.1zM921 256.1V434.9h1V256.1zM922 268.4V434.9h1V268.4zM923 244.0V434.9h1V244.0zM924 268.4V428.6h1V268.4zM925 268.4V428.6h1V268.4zM926 262.2V428.6h1V262.2zM927 262.2V428.6h1V262.2zM928 244.0V428.6h1V244.0zM929 244.0V434.9h1V244.0zM930 250.1V434.9h1V250.1zM931 244.0V434.9h1V244.0zM932 256.1V428.6h1V256.1zM933 256.1V428.6h1V256.1zM934 256.1V428.6h1V256.1zM935 244.0V428.6h1V244.0zM936 256.1V422.4h1V256.1zM937 256.1V422.4h1V256.1zM938 256.1V434.9h1V256.1zM939 256.1V434.9h1V256.1zM940 262.2V434.9h1V262.2zM941 262.2V428.6h1V262.2zM942 268.4V428.6h1V268.4zM943 268.4V434.9h1V268.4zM944 268.4V434.9h1V268.4zM945 268.4V446.9h1V268.4zM946 262.2V446.9h1V262.2zM947 262.2V434.9h1V262.2zM948 250.1V428.6h1V250.1zM949 244.0V434.9h1V244.0zM950 268.4V434.9h1V268.4zM951 268.4V434.9h1V268.4zM952 256.1V428.6h1V256.1zM953 256.1V428.6h1V256.1zM954 237.5V428.6h1V237.5zM955 256.1V434.9h1V256.1zM956 256.1V434.9h1V256.1zM957 250.1V428.6h1V250.1zM958 268.4V428.6h1V268.4zM959 268.4V428.6h1V268.4zM960 268.4V434.9h1V268.4zM961 268.4V434.9h1V268.4zM962 262.2V434.9h1V262.2zM963 244.0V434.9h1V244.0zM964 262.2V434.9h1V262.2zM965 262.2V434.9h1V262.2zM966 262.2V428.6h1V262.2zM967 250.1V428.6h1V250.1zM968 256.1V428.6h1V256.1zM969 262.2V428.6h1V262.2zM970 262.2V428.6h1V262.2zM971 262.2V434.9h1V262.2zM972 250.1V434.9h1V250.1zM973 262.2V434.9h1V262.2zM974 237.5V434.9h1V237.5zM975 268.4V422.4h1V268.4zM976 250.1V422.4h1V250.1zM977 256.1V422.4h1V256.1zM978 256.1V434.9h1V256.1zM979 244.0V428.6h1V244.0zM980 268.4V428.6h1V268.4zM981 268.4V428.6h1V268.4zM982 268.4V428.6h1V268.4zM983 268.4V428.6h1V268.4zM984 256.1V428.6h1V256.1zM985 256.1V428.6h1V256.1zM986 256.1V428.6h1V256.1zM987 256.1V434.9h1V256.1zM988 244.0V428.6h1V244.0zM989 262.2V428.6h1V262.2zM990 237.5V434.9h1V237.5zM991 256.1V434.9h1V256.1zM992 256.1V434.9h1V256.1zM993 256.1V434.9h1V256.1zM994 256.1V446.9h1V256.1zM995 250.1V446.9h1V250.1zM996 262.2V446.9h1V262.2zM997 262.2V428.6h1V262.2zM998 237.5V428.6h1V237.5zM999 244.0V428.6h1V244.0zM1000 268.4V434.9h1V268.4zM1001 268.4V434.9h1V268.4zM1002 268.4V434.9h1V268.4zM1003 268.4V434.9h1V268.4zM1004 244.0V434.9h1V244.0zM1005 262.2V428.6h1V262.2zM1006 268.4V428.6h1V268.4zM1007 268.4V428.6h1V268.4zM1008 268.4V434.9h1V268.4zM1009 268.4V434.9h1V268.4zM1010 244.0V434.9h1V244.0zM1011 244.0V434.9h1V244.0zM1012 250.1V428.6h1V250.1zM1013 262.2V428.6h1V262.2zM1014 250.1V428.6h1V250.1zM1015 268.4V428.6h1V268.4zM1016 262.2V434.9h1V262.2zM1017 262.2V434.9h1V262.2zM1018 268.4V434.9h1V268.4zM1019 268.4V434.9h1V268.4zM1020 244.0V428.6h1V244.0zM1021 244.0V434.9h1V244.0zM1022 256.1V434.9h1V256.1zM1023 268.4V422.4h1V268.4zM1024 268.4V422.4h1V268.4zM1025 262.2V434.9h1V262.2zM1026 268.4V434.9h1V268.4zM1027 268.4V434.9h1V268.4zM1028 268.4V434.9h1V268.4zM1029 268.4V434.9h1V268.4zM1030 256.1V428.6h1V256.1zM1031 262.2V428.6h1V262.2zM1032 268.4V434.9h1V268.4zM1033 262.2V428.6h1V262.2zM1034 262.2V434.9h1V262.2zM1035 262.2V434.9h1V262.2zM1036 268.4V434.9h1V268.4zM1037 262.2V434.9h1V262.2zM1038 262.2V428.6h1V262.2zM1039 262.2V428.6h1V262.2zM1040 262.2V428.6h1V262.2zM1041 262.2V422.4h1V262.2zM1042 262.2V422.4h1V262.2zM1043 262.2V422.4h1V262.2zM1044 244.0V428.6h1V244.0zM1045 244.0V428.6h1V244.0zM1046 262.2V428.6h1V262.2zM1047 262.2V422.4h1V262.2zM1048 262.2V422.4h1V262.2zM1049 262.2V422.4h1V262.2zM1050 244.0V422.4h1V244.0zM1051 256.1V422.4h1V256.1zM1052 256.1V434.9h1V256.1zM1053 250.1V434.9h1V250.1zM1054 256.1V434.9h1V256.1zM1055 256.1V434.9h1V256.1zM1056 250.1V434.9h1V250.1zM1057 250.1V422.4h1V250.1zM1058 268.4V422.4h1V268.4zM1059 268.4V422.4h1V268.4zM1060 268.4V428.6h1V268.4zM1061 268.4V428.6h1V268.4zM1062 244.0V428.6h1V244.0zM1063 250.1V428.6h1V250.1zM1064 250.1V428.6h1V250.1zM1065 244.0V428.6h1V244.0zM1066 262.2V434.9h1V262.2zM1067 262.2V434.9h1V262.2zM1068 262.2V434.9h1V262.2zM1069 244.0V428.6h1V244.0zM1070 256.1V428.6h1V256.1zM1071 244.0V428.6h1V244.0zM1072 256.1V422.4h1V256.1zM1073 256.1V428.6h1V256.1zM1074 256.1V428.6h1V256.1zM1075 256.1V428.6h1V256.1zM1076 250.1V428.6h1V250.1zM1077 250.1V446.9h1V250.1zM1078 262.2V446.9h1V262.2zM1079 268.4V428.6h1V268.4zM1080 268.4V434.9h1V268.4zM1081 268.4V428.6h1V268.4zM1082 268.4V434.9h1V268.4zM1083 256.1V434.9h1V256.1zM1084 256.1V434.9h1V256.1zM1085 256.1V434.9h1V256.1zM1086 256.1V428.6h1V256.1zM1087 256.1V428.6h1V256.1zM1088 256.1V428.6h1V256.1zM1089 256.1V434.9h1V256.1zM1090 268.4V434.9h1V268.4zM1091 268.4V434.9h1V268.4zM1092 268.4V434.9h1V268.4zM1093 250.1V428.6h1V250.1zM1094 256.1V422.4h1V256.1zM1095 256.1V422.4h1V256.1zM1096 244.0V434.9h1V244.0zM1097 256.1V434.9h1V256.1zM1098 256.1V434.9h1V256.1zM1099 256.1V422.4h1V256.1zM1100 268.4V422.4h1V268.4zM1101 268.4V434.9h1V268.4zM1102 268.4V434.9h1V268.4zM1103 268.4V428.6h1V268.4zM1104 268.4V434.9h1V268.4zM1105 268.4V434.9h1V268.4zM1106 268.4V434.9h1V268.4zM1107 256.1V434.9h1V256.1zM1108 244.0V434.9h1V244.0zM1109 262.2V434.9h1V262.2zM1110 262.2V428.6h1V262.2zM1111 262.2V434.9h1V262.2zM1112 262.2V434.9h1V262.2zM1113 262.2V434.9h1V262.2zM1114 244.0V428.6h1V244.0zM1115 256.1V434.9h1V256.1zM1116 256.1V434.9h1V256.1zM1117 268.4V434.9h1V268.4zM1118 268.4V434.9h1V268.4zM1119 268.4V434.9h1V268.4zM1120 268.4V422.4h1V268.4zM1121 262.2V434.9h1V262.2zM1122 256.1V434.9h1V256.1zM1123 256.1V434.9h1V256.1zM1124 256.1V428.6h1V256.1zM1125 256.1V428.6h1V256.1zM1126 262.2V428.6h1V262.2zM1127 262.2V434.9h1V262.2zM1128 262.2V434.9h1V262.2zM1129 262.2V434.9h1V262.2zM1130 262.2V434.9h1V262.2zM1131 250.1V434.9h1V250.1zM1132 250.1V422.4h1V250.1zM1133 250.1V434.9h1V250.1zM1134 262.2V434.9h1V262.2zM1135 262.2V434.9h1V262.2zM1136 268.4V434.9h1V268.4zM1137 268.4V428.6h1V268.4zM1138 244.0V434.9h1V244.0zM1139 268.4V434.9h1V268.4zM1140 250.1V434.9h1V250.1zM1141 262.2V434.9h1V262.2zM1142 262.2V434.9h1V262.2zM1143 262.2V446.9h1V262.2zM1144 262.2V446.9h1V262.2zM1145 262.2V434.9h1V262.2zM1146 256.1V434.9h1V256.1zM1147 237.5V428.6h1V237.5zM1148 256.1V428.6h1V256.1zM1149 256.1V428.6h1V256.1zM1150 244.0V434.9h1V244.0zM1151 244.0V434.9h1V244.0zM1152 268.4V434.9h1V268.4zM1153 268.4V422.4h1V268.4zM1154 268.4V422.4h1V268.4zM1155 268.4V422.4h1V268.4zM1156 268.4V434.9h1V268.4zM1157 244.0V428.6h1V244.0zM1158 256.1V428.6h1V256.1zM1159 256.1V428.6h1V256.1zM1160 256.1V428.6h1V256.1zM1161 268.4V428.6h1V268.4zM1162 262.2V428.6h1V262.2zM1163 262.2V428.6h1V262.2zM1164 262.2V434.9h1V262.2zM1165 262.2V428.6h1V262.2zM1166 262.2V428.6h1V262.2zM1167 262.2V428.6h1V262.2zM1168 262.2V434.9h1V262.2zM1169 262.2V434.9h1V262.2zM1170 262.2V428.6h1V262.2zM1171 256.1V428.6h1V256.1zM1172 250.1V434.9h1V250.1zM1173 262.2V434.9h1V262.2zM1174 262.2V434.9h1V262.2zM1175 256.1V434.9h1V256.1zM1176 268.4V434.9h1V268.4zM1177 268.4V422.4h1V268.4zM1178 250.1V422.4h1V250.1zM1179 256.1V422.4h1V256.1zM1180 256.1V434.9h1V256.1zM1181 256.1V434.9h1V256.1zM1182 256.1V422.4h1V256.1zM1183 262.2V428.6h1V262.2zM1184 262.2V428.6h1V262.2zM1185 256.1V428.6h1V256.1zM1186 244.0V428.6h1V244.0zM1187 268.4V434.9h1V268.4zM1188 268.4V428.6h1V268.4zM1189 244.0V428.6h1V244.0zM1190 262.2V434.9h1V262.2zM1191 250.1V434.9h1V250.1zM1192 244.0V434.9h1V244.0zM1193 262.2V446.9h1V262.2zM1194 262.2V428.6h1V262.2zM1195 268.4V428.6h1V268.4zM1196 268.4V428.6h1V268.4zM1197 237.5V428.6h1V237.5zM1198 256.1V428.6h1V256.1zM1199 256.1V434.9h1V256.1zM1200 244.0V434.9h1V244.0zM1201 244.0V434.9h1V244.0zM1202 244.0V434.9h1V244.0zM1203 262.2V428.6h1V262.2zM1204 244.0V422.4h1V244.0zM1205 262.2V422.4h1V262.2zM1206 262.2V422.4h1V262.2zM1207 262.2V434.9h1V262.2zM1208 256.1V434.9h1V256.1zM1209 256.1V428.6h1V256.1zM1210 262.2V428.6h1V262.2zM1211 262.2V434.9h1V262.2zM1212 244.0V434.9h1V244.0zM1213 256.1V434.9h1V256.1zM1214 244.0V434.9h1V244.0zM1215 250.1V434.9h1V250.1zM1216 244.0V428.6h1V244.0zM1217 244.0V428.6h1V244.0zM1218 256.1V428.6h1V256.1zM1219 256.1V428.6h1V256.1zM1220 256.1V428.6h1V256.1zM1221 256.1V434.9h1V256.1zM1222 268.4V434.9h1V268.4zM1223 268.4V428.6h1V268.4zM1224 268.4V428.6h1V268.4zM1225 268.4V428.6h1V268.4zM1226 256.1V428.6h1V256.1zM1227 256.1V434.9h1V256.1zM1228 256.1V434.9h1V256.1zM1229 244.0V428.6h1V244.0zM1230 250.1V428.6h1V250.1zM1231 262.2V434.9h1V262.2zM1232 244.0V434.9h1V244.0zM1233 256.1V428.6h1V256.1zM1234 256.1V434.9h1V256.1zM1235 256.1V434.9h1V256.1zM1236 262.2V434.9h1V262.2zM1237 262.2V434.9h1V262.2zM1238 250.1V434.9h1V250.1zM1239 244.0V434.9h1V244.0zM1240 262.2V434.9h1V262.2zM1241 262.2V428.6h1V262.2zM1242 262.2V434.9h1V262.2zM1243 262.2V434.9h1V262.2zM1244 262.2V434.9h1V262.2zM1245 262.2V434.9h1V262.2zM1246 256.1V434.9h1V256.1zM1247 256.1V434.9h1V256.1zM1248 268.4V434.9h1V268.4zM1249 268.4V434.9h1V268.4zM1250 268.4V434.9h1V268.4zM1251 268.4V428.6h1V268.4zM1252 262.2V428.6h1V262.2zM1253 256.1V434.9h1V256.1zM1254 256.1V434.9h1V256.1zM1255 256.1V434.9h1V256.1zM1256 256.1V428.6h1V256.1zM1257 244.0V428.6h1V244.0zM1258 237.5V434.9h1V237.5zM1259 256.1V428.6h1V256.1zM1260 256.1V428.6h1V256.1zM1261 268.4V428.6h1V268.4zM1262 268.4V428.6h1V268.4zM1263 256.1V428.6h1V256.1zM1264 256.1V428.6h1V256.1zM1265 262.2V434.9h1V262.2zM1266 262.2V434.9h1V262.2zM1267 244.0V434.9h1V244.0zM1268 262.2V428.6h1V262.2zM1269 244.0V428.6h1V244.0zM1270 256.1V428.6h1V256.1zM1271 256.1V428.6h1V256.1zM1272 244.0V428.6h1V244.0zM1273 262.2V434.9h1V262.2zM1274 262.2V428.6h1V262.2zM1275 262.2V428.6h1V262.2zM1276 256.1V428.6h1V256.1zM1277 256.1V434.9h1V256.1zM1278 256.1V422.4h1V256.1zM1279 244.0V422.4h1V244.0zM1280 262.2V434.9h1V262.2zM1281 262.2V434.9h1V262.2zM1282 262.2V428.6h1V262.2zM1283 256.1V428.6h1V256.1zM1284 268.4V428.6h1V268.4zM1285 256.1V434.9h1V256.1zM1286 256.1V434.9h1V256.1zM1287 256.1V446.9h1V256.1zM1288 256.1V434.9h1V256.1zM1289 256.1V428.6h1V256.1zM1290 256.1V428.6h1V256.1zM1291 244.0V422.4h1V244.0zM1292 244.0V422.4h1V244.0zM1293 268.4V428.6h1V268.4zM1294 256.1V428.6h1V256.1zM1295 256.1V428.6h1V256.1zM1296 244.0V434.9h1V244.0zM1297 256.1V434.9h1V256.1zM1298 256.1V434.9h1V256.1zM1299 256.1V434.9h1V256.1zM1300 256.1V428.6h1V256.1zM1301 244.0V434.9h1V244.0zM1302 244.0V428.6h1V244.0zM1303 262.2V428.6h1V262.2zM1304 262.2V428.6h1V262.2zM1305 256.1V446.9h1V256.1zM1306 256.1V446.9h1V256.1zM1307 256.1V446.9h1V256.1zM1308 256.1V434.9h1V256.1zM1309 268.4V428.6h1V268.4zM1310 268.4V428.6h1V268.4zM1311 268.4V446.9h1V268.4zM1312 268.4V428.6h1V268.4zM1313 250.1V434.9h1V250.1zM1314 244.0V434.9h1V244.0zM1315 244.0V434.9h1V244.0zM1316 268.4V428.6h1V268.4zM1317 268.4V428.6h1V268.4zM1318 262.2V434.9h1V262.2zM1319 250.1V434.9h1V250.1zM1320 262.2V434.9h1V262.2zM1321 250.1V434.9h1V250.1zM1322 256.1V434.9h1V256.1zM1323 256.1V422.4h1V256.1zM1324 250.1V428.6h1V250.1zM1325 268.4V434.9h1V268.4zM1326 262.2V434.9h1V262.2zM1327 262.2V434.9h1V262.2zM1328 262.2V434.9h1V262.2zM1329 262.2V434.9h1V262.2zM1330 262.2V434.9h1V262.2zM1331 262.2V434.9h1V262.2zM1332 262.2V434.9h1V262.2zM1333 262.2V428.6h1V262.2zM1334 268.4V428.6h1V268.4zM1335 268.4V428.6h1V268.4zM1336 268.4V428.6h1V268.4zM1337 262.2V428.6h1V262.2zM1338 262.2V428.6h1V262.2zM1339 262.2V428.6h1V262.2zM1340 262.2V428.6h1V262.2zM1341 250.1V434.9h1V250.1zM1342 244.0V434.9h1V244.0zM1343 256.1V434.9h1V256.1zM1344 256.1V434.9h1V256.1zM1345 244.0V422.4h1V244.0zM1346 250.1V422.4h1V250.1zM1347 262.2V434.9h1V262.2zM1348 262.2V434.9h1V262.2zM1349 262.2V434.9h1V262.2zM1350 262.2V428.6h1V262.2zM1351 262.2V428.6h1V262.2zM1352 250.1V446.9h1V250.1zM1353 268.4V446.9h1V268.4zM1354 250.1V434.9h1V250.1zM1355 244.0V434.9h1V244.0zM1356 262.2V434.9h1V262.2zM1357 250.1V422.4h1V250.1zM1358 250.1V428.6h1V250.1zM1359 256.1V434.9h1V256.1zM1360 256.1V434.9h1V256.1zM1361 262.2V434.9h1V262.2zM1362 262.2V428.6h1V262.2zM1363 250.1V428.6h1V250.1zM1364 256.1V428.6h1V256.1zM1365 256.1V428.6h1V256.1zM1366 262.2V434.9h1V262.2zM1367 262.2V428.6h1V262.2zM1368 262.2V428.6h1V262.2zM1369 262.2V428.6h1V262.2zM1370 268.4V428.6h1V268.4zM1371 268.4V428.6h1V268.4zM1372 268.4V428.6h1V268.4zM1373 256.1V428.6h1V256.1zM1374 244.0V428.6h1V244.0zM1375 256.1V428.6h1V256.1zM1376 256.1V428.6h1V256.1zM1377 256.1V428.6h1V256.1zM1378 256.1V422.4h1V256.1zM1379 268.4V422.4h1V268.4zM1380 268.4V422.4h1V268.4zM1381 268.4V434.9h1V268.4zM1382 262.2V434.9h1V262.2zM1383 262.2V434.9h1V262.2zM1384 268.4V428.6h1V268.4zM1385 244.0V446.9h1V244.0zM1386 262.2V446.9h1V262.2zM1387 250.1V446.9h1V250.1zM1388 262.2V434.9h1V262.2zM1389 262.2V428.6h1V262.2zM1390 244.0V428.6h1V244.0zM1391 244.0V434.9h1V244.0zM1392 250.1V434.9h1V250.1zM1393 237.5V428.6h1V237.5zM1394 244.0V428.6h1V244.0zM1395 262.2V428.6h1V262.2zM1396 250.1V422.4h1V250.1zM1397 256.1V422.4h1V256.1zM1398 256.1V428.6h1V256.1zM1399 268.4V428.6h1V268.4zM1400 268.4V428.6h1V268.4zM1401 268.4V428.6h1V268.4zM1402 268.4V428.6h1V268.4zM1403 250.1V428.6h1V250.1zM1404 244.0V428.6h1V244.0zM1405 237.5V428.6h1V237.5zM1406 256.1V428.6h1V256.1zM1407 268.4V434.9h1V268.4zM1408 268.4V434.9h1V268.4zM1409 268.4V434.9h1V268.4zM1410 268.4V434.9h1V268.4zM1411 244.0V434.9h1V244.0zM1412 262.2V434.9h1V262.2zM1413 256.1V434.9h1V256.1zM1414 256.1V428.6h1V256.1zM1415 244.0V434.9h1V244.0zM1416 256.1V434.9h1V256.1zM1417 250.1V434.9h1V250.1zM1418 262.2V434.9h1V262.2zM1419 262.2V434.9h1V262.2zM1420 262.2V422.4h1V262.2zM1421 244.0V422.4h1V244.0zM1422 262.2V422.4h1V262.2zM1423 262.2V434.9h1V262.2zM1424 250.1V434.9h1V250.1zM1425 256.1V434.9h1V256.1zM1426 256.1V434.9h1V256.1zM1427 256.1V428.6h1V256.1zM1428 256.1V428.6h1V256.1zM1429 256.1V428.6h1V256.1zM1430 256.1V434.9h1V256.1zM1431 256.1V434.9h1V256.1zM1432 256.1V428.6h1V256.1zM1433 244.0V428.6h1V244.0zM1434 268.4V434.9h1V268.4zM1435 256.1V434.9h1V256.1zM1436 262.2V428.6h1V262.2zM1437 262.2V428.6h1V262.2zM1438 262.2V428.6h1V262.2zM1439 262.2V428.6h1V262.2zM1440 268.4V434.9h1V268.4zM1441 268.4V422.4h1V268.4zM1442 268.4V422.4h1V268.4zM1443 262.2V422.4h1V262.2zM1444 262.2V428.6h1V262.2zM1445 262.2V428.6h1V262.2zM1446 262.2V434.9h1V262.2zM1447 262.2V434.9h1V262.2zM1448 268.4V434.9h1V268.4zM1449 268.4V446.9h1V268.4zM1450 268.4V428.6h1V268.4zM1451 268.4V428.6h1V268.4zM1452 250.1V428.6h1V250.1zM1453 262.2V428.6h1V262.2zM1454 262.2V434.9h1V262.2zM1455 262.2V434.9h1V262.2zM1456 262.2V434.9h1V262.2zM1457 262.2V428.6h1V262.2zM1458 262.2V446.9h1V262.2zM1459 244.0V446.9h1V244.0zM1460 244.0V428.6h1V244.0zM1461 250.1V434.9h1V250.1zM1462 244.0V434.9h1V244.0zM1463 268.4V428.6h1V268.4zM1464 268.4V446.9h1V268.4zM1465 268.4V434.9h1V268.4zM1466 268.4V428.6h1V268.4zM1467 268.4V434.9h1V268.4zM1468 244.0V422.4h1V244.0zM1469 244.0V422.4h1V244.0zM1470 256.1V422.4h1V256.1zM1471 256.1V434.9h1V256.1zM1472 244.0V422.4h1V244.0zM1473 244.0V422.4h1V244.0zM1474 262.2V434.9h1V262.2zM1475 262.2V434.9h1V262.2zM1476 262.2V434.9h1V262.2zM1477 262.2V434.9h1V262.2zM1478 262.2V434.9h1V262.2zM1479 262.2V428.6h1V262.2zM1480 262.2V434.9h1V262.2zM1481 262.2V434.9h1V262.2zM1482 262.2V434.9h1V262.2zM1483 262.2V428.6h1V262.2zM1484 244.0V428.6h1V244.0zM1485 256.1V428.6h1V256.1zM1486 256.1V434.9h1V256.1zM1487 244.0V428.6h1V244.0zM1488 256.1V428.6h1V256.1zM1489 256.1V434.9h1V256.1zM1490 256.1V434.9h1V256.1zM1491 268.4V434.9h1V268.4zM1492 256.1V434.9h1V256.1zM1493 262.2V434.9h1V262.2zM1494 250.1V434.9h1V250.1zM1495 256.1V434.9h1V256.1zM1496 256.1V434.9h1V256.1zM1497 256.1V434.9h1V256.1zM1498 262.2V434.9h1V262.2zM1499 262.2V434.9h1V262.2zM1500 244.0V434.9h1V244.0zM1501 237.5V422.4h1V237.5zM1502 262.2V434.9h1V262.2zM1503 262.2V428.6h1V262.2zM1504 262.2V434.9h1V262.2zM1505 256.1V434.9h1V256.1zM1506 256.1V434.9h1V256.1zM1507 256.1V434.9h1V256.1zM1508 256.1V434.9h1V256.1zM1509 244.0V422.4h1V244.0zM1510 262.2V422.4h1V262.2zM1511 256.1V428.6h1V256.1zM1512 256.1V428.6h1V256.1zM1513 256.1V428.6h1V256.1zM1514 244.0V434.9h1V244.0zM1515 262.2V434.9h1V262.2zM1516 262.2V434.9h1V262.2zM1517 262.2V434.9h1V262.2zM1518 244.0V434.9h1V244.0zM1519 250.1V428.6h1V250.1zM1520 262.2V422.4h1V262.2zM1521 262.2V422.4h1V262.2zM1522 262.2V428.6h1V262.2zM1523 262.2V428.6h1V262.2zM1524 262.2V428.6h1V262.2zM1525 262.2V422.4h1V262.2zM1526 262.2V428.6h1V262.2zM1527 250.1V428.6h1V250.1zM1528 262.2V434.9h1V262.2zM1529 262.2V434.9h1V262.2zM1530 262.2V434.9h1V262.2zM1531 262.2V422.4h1V262.2zM1532 262.2V422.4h1V262.2zM1533 262.2V422.4h1V262.2zM1534 256.1V434.9h1V256.1zM1535 256.1V434.9h1V256.1zM1536 250.1V434.9h1V250.1zM1537 268.4V434.9h1V268.4zM1538 268.4V434.9h1V268.4zM1539 237.5V434.9h1V237.5zM1540 268.4V434.9h1V268.4zM1541 268.4V434.9h1V268.4zM1542 244.0V428.6h1V244.0zM1543 262.2V428.6h1V262.2zM1544 262.2V428.6h1V262.2zM1545 244.0V428.6h1V244.0zM1546 268.4V428.6h1V268.4zM1547 268.4V428.6h1V268.4zM1548 262.2V446.9h1V262.2zM1549 262.2V446.9h1V262.2zM1550 262.2V434.9h1V262.2zM1551 262.2V434.9h1V262.2zM1552 262.2V434.9h1V262.2zM1553 256.1V434.9h1V256.1zM1554 256.1V434.9h1V256.1zM1555 256.1V428.6h1V256.1zM1556 244.0V434.9h1V244.0zM1557 250.1V434.9h1V250.1zM1558 268.4V434.9h1V268.4zM1559 268.4V428.6h1V268.4zM1560 268.4V434.9h1V268.4zM1561 268.4V434.9h1V268.4zM1562 256.1V434.9h1V256.1zM1563 256.1V434.9h1V256.1zM1564 256.1V434.9h1V256.1zM1565 256.1V434.9h1V256.1zM1566 256.1V434.9h1V256.1zM1567 268.4V434.9h1V268.4zM1568 268.4V428.6h1V268.4zM1569 268.4V428.6h1V268.4zM1570 268.4V434.9h1V268.4zM1571 268.4V422.4h1V268.4zM1572 268.4V428.6h1V268.4zM1573 250.1V428.6h1V250.1zM1574 262.2V434.9h1V262.2zM1575 244.0V434.9h1V244.0zM1576 256.1V428.6h1V256.1zM1577 256.1V428.6h1V256.1zM1578 262.2V428.6h1V262.2zM1579 262.2V434.9h1V262.2zM1580 268.4V434.9h1V268.4zM1581 244.0V428.6h1V244.0zM1582 256.1V428.6h1V256.1zM1583 256.1V434.9h1V256.1zM1584 256.1V428.6h1V256.1zM1585 250.1V434.9h1V250.1zM1586 262.2V434.9h1V262.2zM1587 262.2V428.6h1V262.2zM1588 262.2V434.9h1V262.2zM1589 268.4V434.9h1V268.4zM1590 256.1V434.9h1V256.1zM1591 256.1V434.9h1V256.1zM1592 256.1V428.6h1V256.1zM1593 256.1V428.6h1V256.1zM1594 250.1V428.6h1V250.1zM1595 256.1V428.6h1V256.1zM1596 262.2V428.6h1V262.2zM1597 262.2V428.6h1V262.2zM1598 262.2V428.6h1V262.2zM1599 244.0V428.6h1V244.0zM1600 256.1V434.9h1V256.1zM1601 244.0V434.9h1V244.0zM1602 237.5V428.6h1V237.5zM1603 256.1V428.6h1V256.1zM1604 256.1V428.6h1V256.1zM1605 256.1V434.9h1V256.1zM1606 262.2V434.9h1V262.2zM1607 256.1V428.6h1V256.1zM1608 256.1V428.6h1V256.1zM1609 256.1V428.6h1V256.1zM1610 256.1V434.9h1V256.1zM1611 256.1V434.9h1V256.1zM1612 262.2V434.9h1V262.2zM1613 256.1V428.6h1V256.1zM1614 256.1V422.4h1V256.1zM1615 256.1V422.4h1V256.1zM1616 256.1V434.9h1V256.1zM1617 244.0V434.9h1V244.0zM1618 256.1V428.6h1V256.1zM1619 256.1V428.6h1V256.1zM1620 256.1V428.6h1V256.1zM1621 250.1V434.9h1V250.1zM1622 256.1V434.9h1V256.1zM1623 256.1V428.6h1V256.1zM1624 256.1V428.6h1V256.1zM1625 262.2V434.9h1V262.2zM1626 262.2V434.9h1V262.2zM1627 262.2V428.6h1V262.2zM1628 262.2V428.6h1V262.2zM1629 262.2V434.9h1V262.2zM1630 262.2V434.9h1V262.2zM1631 268.4V434.9h1V268.4zM1632 268.4V434.9h1V268.4zM1633 244.0V434.9h1V244.0zM1634 244.0V428.6h1V244.0zM1635 244.0V428.6h1V244.0zM1636 262.2V434.9h1V262.2zM1637 244.0V434.9h1V244.0zM1638 256.1V434.9h1V256.1zM1639 256.1V434.9h1V256.1zM1640 256.1V428.6h1V256.1zM1641 256.1V428.6h1V256.1zM1642 256.1V428.6h1V256.1zM1643 256.1V434.9h1V256.1zM1644 256.1V428.6h1V256.1zM1645 256.1V428.6h1V256.1zM1646 256.1V434.9h1V256.1zM1647 250.1V422.4h1V250.1zM1648 244.0V434.9h1V244.0zM1649 262.2V434.9h1V262.2zM1650 250.1V428.6h1V250.1zM1651 256.1V428.6h1V256.1zM1652 244.0V434.9h1V244.0zM1653 262.2V434.9h1V262.2zM1654 268.4V434.9h1V268.4zM1655 268.4V434.9h1V268.4zM1656 268.4V434.9h1V268.4zM1657 262.2V434.9h1V262.2zM1658 262.2V434.9h1V262.2zM1659 262.2V434.9h1V262.2zM1660 244.0V428.6h1V244.0zM1661 244.0V422.4h1V244.0zM1662 262.2V422.4h1V262.2zM1663 262.2V422.4h1V262.2zM1664 262.2V428.6h1V262.2zM1665 244.0V434.9h1V244.0zM1666 250.1V434.9h1V250.1zM1667 250.1V428.6h1V250.1zM1668 262.2V428.6h1V262.2zM1669 262.2V428.6h1V262.2zM1670 256.1V428.6h1V256.1zM1671 256.1V434.9h1V256.1zM1672 256.1V434.9h1V256.1zM1673 244.0V428.6h1V244.0zM1674 244.0V446.9h1V244.0zM1675 250.1V446.9h1V250.1zM1676 262.2V428.6h1V262.2zM1677 256.1V428.6h1V256.1zM1678 256.1V434.9h1V256.1zM1679 256.1V434.9h1V256.1zM1680 256.1V428.6h1V256.1zM1681 256.1V428.6h1V256.1zM1682 256.1V434.9h1V256.1zM1683 256.1V428.6h1V256.1zM1684 256.1V428.6h1V256.1zM1685 268.4V434.9h1V268.4zM1686 268.4V434.9h1V268.4zM1687 256.1V428.6h1V256.1zM1688 256.1V428.6h1V256.1zM1689 244.0V428.6h1V244.0zM1690 219.0V434.9h1V219.0zM1691 256.1V434.9h1V256.1zM1692 244.0V434.9h1V244.0zM1693 256.1V428.6h1V256.1zM1694 262.2V428.6h1V262.2zM1695 262.2V434.9h1V262.2zM1696 256.1V434.9h1V256.1zM1697 256.1V434.9h1V256.1zM1698 256.1V434.9h1V256.1zM1699 256.1V428.6h1V256.1zM1700 256.1V428.6h1V256.1zM1701 256.1V428.6h1V256.1zM1702 268.4V428.6h1V268.4zM1703 268.4V434.9h1V268.4zM1704 268.4V434.9h1V268.4zM1705 268.4V428.6h1V268.4zM1706 262.2V428.6h1V262.2zM1707 262.2V446.9h1V262.2zM1708 262.2V446.9h1V262.2zM1709 262.2V446.9h1V262.2zM1710 262.2V434.9h1V262.2zM1711 262.2V434.9h1V262.2zM1712 262.2V434.9h1V262.2z"/></svg>
<div class="a" style="left:516px;top:504px;width:1203px;height:84px;background:#ffffff;border:1px solid #dde2e5;box-sizing:border-box;"></div>
<svg class="a" style="left:0;top:0" width="1920" height="1080"><rect x="816" y="505" width="902" height="82" fill="#bec8ce"/><path fill="#00a9ce" d="M517 530.2V544.0h1V530.2zM518 529.5V543.5h1V529.5zM519 529.8V543.2h1V529.8zM520 529.8V545.6h1V529.8zM521 529.8V544.8h1V529.8zM522 529.5V544.4h1V529.5zM523 529.5V546.2h1V529.5zM524 529.8V546.1h1V529.8zM525 530.2V544.6h1V530.2zM526 529.5V545.3h1V529.5zM527 529.8V545.1h1V529.8zM528 529.8V544.6h1V529.8zM529 529.5V547.8h1V529.5zM530 530.2V544.4h1V530.2zM531 529.8V544.7h1V529.8zM532 529.5V544.3h1V529.5zM533 529.8V545.7h1V529.8zM534 529.8V545.3h1V529.8zM535 529.5V545.2h1V529.5zM536 530.2V544.1h1V530.2zM537 529.8V544.0h1V529.8zM538 529.8V543.5h1V529.8zM539 530.2V544.8h1V530.2zM540 530.2V545.4h1V530.2zM541 529.8V546.2h1V529.8zM542 529.5V545.6h1V529.5zM543 529.8V545.8h1V529.8zM544 529.8V544.4h1V529.8zM545 529.8V544.2h1V529.8zM546 529.5V544.1h1V529.5zM547 529.8V544.0h1V529.8zM548 530.2V545.5h1V530.2zM549 529.8V545.3h1V529.8zM550 529.8V545.1h1V529.8zM551 529.8V545.1h1V529.8zM552 529.5V545.5h1V529.5zM553 529.5V545.3h1V529.5zM554 529.5V544.6h1V529.5zM555 530.2V543.8h1V530.2zM556 529.8V549.4h1V529.8zM557 529.8V544.2h1V529.8zM558 529.8V544.6h1V529.8zM559 529.8V545.3h1V529.8zM560 529.8V544.7h1V529.8zM561 529.8V544.8h1V529.8zM562 530.2V544.9h1V530.2zM563 529.8V545.0h1V529.8zM564 529.8V551.0h1V529.8zM565 530.2V545.5h1V530.2zM566 529.8V544.7h1V529.8zM567 529.8V544.9h1V529.8zM568 530.2V543.9h1V530.2zM569 529.8V544.5h1V529.8zM570 529.8V544.7h1V529.8zM571 529.5V544.9h1V529.5zM572 529.5V544.9h1V529.5zM573 529.5V545.5h1V529.5zM574 529.8V544.2h1V529.8zM575 529.5V543.6h1V529.5zM576 529.8V543.3h1V529.8zM577 529.8V543.7h1V529.8zM578 530.2V544.3h1V530.2zM579 529.8V545.7h1V529.8zM580 529.5V546.8h1V529.5zM581 529.8V546.9h1V529.8zM582 530.2V551.0h1V530.2zM583 529.5V545.5h1V529.5zM584 529.8V545.2h1V529.8zM585 529.8V545.6h1V529.8zM586 529.8V545.3h1V529.8zM587 530.2V546.7h1V530.2zM588 529.8V547.3h1V529.8zM589 529.8V546.2h1V529.8zM590 529.8V545.6h1V529.8zM591 529.5V546.3h1V529.5zM592 529.8V547.1h1V529.8zM593 529.8V545.6h1V529.8zM594 529.8V546.8h1V529.8zM595 529.8V545.9h1V529.8zM596 529.8V546.9h1V529.8zM597 529.8V547.5h1V529.8zM598 529.8V545.7h1V529.8zM599 529.8V546.9h1V529.8zM600 529.8V546.4h1V529.8zM601 529.8V545.2h1V529.8zM602 530.2V545.1h1V530.2zM603 529.8V545.6h1V529.8zM604 529.8V545.3h1V529.8zM605 529.8V547.1h1V529.8zM606 529.8V544.6h1V529.8zM607 529.5V544.3h1V529.5zM608 529.8V545.1h1V529.8zM609 529.8V545.6h1V529.8zM610 529.5V545.8h1V529.5zM611 529.8V549.4h1V529.8zM612 530.2V543.7h1V530.2zM613 530.2V545.8h1V530.2zM614 529.5V544.9h1V529.5zM615 529.8V544.5h1V529.8zM616 529.8V543.7h1V529.8zM617 529.8V544.4h1V529.8zM618 529.8V545.7h1V529.8zM619 529.8V546.3h1V529.8zM620 530.2V544.7h1V530.2zM621 529.8V545.8h1V529.8zM622 529.5V545.9h1V529.5zM623 529.8V546.0h1V529.8zM624 529.5V545.0h1V529.5zM625 529.5V544.5h1V529.5zM626 529.8V544.7h1V529.8zM627 529.8V546.4h1V529.8zM628 529.8V546.2h1V529.8zM629 529.8V545.6h1V529.8zM630 530.2V544.8h1V530.2zM631 529.8V545.9h1V529.8zM632 529.5V546.9h1V529.5zM633 529.8V545.5h1V529.8zM634 529.5V544.7h1V529.5zM635 529.8V544.9h1V529.8zM636 530.2V544.9h1V530.2zM637 529.5V544.5h1V529.5zM638 529.5V544.2h1V529.5zM639 529.8V546.1h1V529.8zM640 529.5V545.1h1V529.5zM641 529.5V544.5h1V529.5zM642 530.2V544.3h1V530.2zM643 529.5V546.1h1V529.5zM644 529.8V544.6h1V529.8zM645 529.8V548.8h1V529.8zM646 529.8V545.9h1V529.8zM647 529.8V546.4h1V529.8zM648 529.5V545.7h1V529.5zM649 529.8V544.9h1V529.8zM650 529.8V544.9h1V529.8zM651 529.5V545.5h1V529.5zM652 529.5V545.7h1V529.5zM653 529.8V549.9h1V529.8zM654 529.8V544.9h1V529.8zM655 530.2V544.0h1V530.2zM656 530.2V544.0h1V530.2zM657 529.8V544.0h1V529.8zM658 529.8V544.5h1V529.8zM659 530.2V544.2h1V530.2zM660 529.5V544.6h1V529.5zM661 529.8V545.3h1V529.8zM662 529.5V546.7h1V529.5zM663 529.8V545.3h1V529.8zM664 529.5V546.2h1V529.5zM665 530.2V546.6h1V530.2zM666 529.5V545.3h1V529.5zM667 529.8V545.1h1V529.8zM668 529.5V544.1h1V529.5zM669 530.2V545.0h1V530.2zM670 529.8V550.5h1V529.8zM671 530.2V545.8h1V530.2zM672 530.2V544.4h1V530.2zM673 529.8V544.7h1V529.8zM674 529.5V544.8h1V529.5zM675 529.5V544.4h1V529.5zM676 529.5V544.2h1V529.5zM677 529.5V544.1h1V529.5zM678 529.8V544.1h1V529.8zM679 529.8V545.0h1V529.8zM680 529.8V545.5h1V529.8zM681 530.2V545.8h1V530.2zM682 529.8V546.9h1V529.8zM683 529.8V546.4h1V529.8zM684 529.8V547.2h1V529.8zM685 529.5V546.1h1V529.5zM686 529.8V545.1h1V529.8zM687 529.8V545.5h1V529.8zM688 529.5V544.8h1V529.5zM689 529.5V545.4h1V529.5zM690 530.2V544.7h1V530.2zM691 529.8V544.8h1V529.8zM692 529.8V544.4h1V529.8zM693 529.8V547.7h1V529.8zM694 529.8V544.9h1V529.8zM695 529.8V544.9h1V529.8zM696 529.8V544.0h1V529.8zM697 529.8V547.0h1V529.8zM698 529.5V543.5h1V529.5zM699 529.8V544.7h1V529.8zM700 529.8V546.4h1V529.8zM701 529.8V545.2h1V529.8zM702 529.8V544.6h1V529.8zM703 530.2V545.8h1V530.2zM704 529.8V544.4h1V529.8zM705 529.8V543.7h1V529.8zM706 529.8V543.8h1V529.8zM707 529.8V543.9h1V529.8zM708 529.8V545.0h1V529.8zM709 529.5V544.5h1V529.5zM710 529.5V545.2h1V529.5zM711 529.8V546.6h1V529.8zM712 529.8V547.3h1V529.8zM713 529.5V546.2h1V529.5zM714 529.5V547.1h1V529.5zM715 529.8V546.0h1V529.8zM716 529.8V545.0h1V529.8zM717 529.5V545.0h1V529.5zM718 529.8V545.5h1V529.8zM719 529.8V544.3h1V529.8zM720 529.8V546.1h1V529.8zM721 529.8V546.1h1V529.8zM722 530.2V545.5h1V530.2zM723 529.8V544.3h1V529.8zM724 530.2V545.1h1V530.2zM725 530.2V546.1h1V530.2zM726 529.8V544.5h1V529.8zM727 530.2V544.8h1V530.2zM728 529.8V545.9h1V529.8zM729 530.2V545.4h1V530.2zM730 530.2V545.2h1V530.2zM731 529.8V545.1h1V529.8zM732 530.2V545.1h1V530.2zM733 529.5V546.5h1V529.5zM734 529.8V549.3h1V529.8zM735 529.8V546.6h1V529.8zM736 529.8V545.3h1V529.8zM737 529.8V545.2h1V529.8zM738 529.8V544.6h1V529.8zM739 530.2V544.3h1V530.2zM740 530.2V545.1h1V530.2zM741 529.5V545.1h1V529.5zM742 529.8V544.0h1V529.8zM743 529.8V545.5h1V529.8zM744 529.8V544.3h1V529.8zM745 529.8V544.1h1V529.8zM746 529.8V547.6h1V529.8zM747 529.5V544.8h1V529.5zM748 529.5V544.4h1V529.5zM749 529.8V545.2h1V529.8zM750 529.8V545.1h1V529.8zM751 529.8V545.0h1V529.8zM752 529.8V544.0h1V529.8zM753 529.8V549.5h1V529.8zM754 529.8V546.3h1V529.8zM755 529.8V546.6h1V529.8zM756 529.8V546.8h1V529.8zM757 530.2V546.9h1V530.2zM758 530.2V547.0h1V530.2zM759 529.8V546.0h1V529.8zM760 529.5V546.5h1V529.5zM761 529.8V545.2h1V529.8zM762 529.8V546.1h1V529.8zM763 530.2V546.1h1V530.2zM764 529.8V547.0h1V529.8zM765 529.5V546.5h1V529.5zM766 529.8V546.8h1V529.8zM767 530.2V545.9h1V530.2zM768 529.8V544.9h1V529.8zM769 529.8V545.0h1V529.8zM770 529.8V546.5h1V529.8zM771 529.8V546.2h1V529.8zM772 529.8V546.1h1V529.8zM773 529.8V547.1h1V529.8zM774 529.8V546.5h1V529.8zM775 529.8V546.8h1V529.8zM776 530.2V545.4h1V530.2zM777 529.5V545.2h1V529.5zM778 529.8V546.1h1V529.8zM779 529.8V547.0h1V529.8zM780 529.8V547.5h1V529.8zM781 529.8V546.8h1V529.8zM782 529.5V546.4h1V529.5zM783 529.8V544.7h1V529.8zM784 529.5V544.8h1V529.5zM785 529.8V544.9h1V529.8zM786 529.8V545.0h1V529.8zM787 529.5V546.5h1V529.5zM788 529.8V546.7h1V529.8zM789 529.5V546.4h1V529.5zM790 530.2V546.7h1V530.2zM791 529.8V546.8h1V529.8zM792 529.8V546.4h1V529.8zM793 529.8V545.7h1V529.8zM794 529.5V545.9h1V529.5zM795 529.8V544.9h1V529.8zM796 530.2V546.0h1V530.2zM797 529.8V545.0h1V529.8zM798 530.2V546.0h1V530.2zM799 529.8V545.0h1V529.8zM800 529.8V544.0h1V529.8zM801 529.8V545.5h1V529.8zM802 529.8V545.7h1V529.8zM803 529.8V544.9h1V529.8zM804 529.5V543.9h1V529.5zM805 529.8V546.0h1V529.8zM806 529.8V546.0h1V529.8zM807 529.5V546.5h1V529.5zM808 530.2V544.7h1V530.2zM809 529.8V545.4h1V529.8zM810 529.8V545.2h1V529.8zM811 529.8V546.1h1V529.8zM812 529.5V546.5h1V529.5zM813 529.8V545.8h1V529.8zM814 530.2V545.4h1V530.2zM815 529.8V545.2h1V529.8z"/><path fill="#419db8" d="M816 530.2V546.6h1V530.2zM817 529.8V546.3h1V529.8zM818 529.5V544.6h1V529.5zM819 529.5V544.3h1V529.5zM820 529.8V543.7h1V529.8zM821 529.8V544.3h1V529.8zM822 529.5V546.2h1V529.5zM823 530.2V545.6h1V530.2zM824 529.8V546.3h1V529.8zM825 529.8V545.1h1V529.8zM826 529.5V546.6h1V529.5zM827 529.5V545.3h1V529.5zM828 529.8V545.1h1V529.8zM829 529.8V545.1h1V529.8zM830 529.8V545.0h1V529.8zM831 530.2V545.0h1V530.2zM832 530.2V546.0h1V530.2zM833 529.8V544.5h1V529.8zM834 529.8V544.8h1V529.8zM835 529.5V544.4h1V529.5zM836 529.8V544.7h1V529.8zM837 529.8V545.8h1V529.8zM838 530.2V544.9h1V530.2zM839 529.5V544.5h1V529.5zM840 529.8V545.7h1V529.8zM841 529.8V544.4h1V529.8zM842 529.8V544.2h1V529.8zM843 529.8V546.1h1V529.8zM844 529.8V547.0h1V529.8zM845 529.5V545.5h1V529.5zM846 529.8V545.3h1V529.8zM847 529.8V544.6h1V529.8zM848 529.8V544.3h1V529.8zM849 529.8V545.2h1V529.8zM850 529.8V545.6h1V529.8zM851 529.8V545.3h1V529.8zM852 529.5V546.6h1V529.5zM853 529.8V545.3h1V529.8zM854 529.8V549.2h1V529.8zM855 529.8V545.6h1V529.8zM856 530.2V545.8h1V530.2zM857 529.8V545.9h1V529.8zM858 529.8V544.4h1V529.8zM859 529.8V544.2h1V529.8zM860 529.8V544.1h1V529.8zM861 529.5V544.1h1V529.5zM862 529.8V543.5h1V529.8zM863 529.8V544.3h1V529.8zM864 529.8V544.6h1V529.8zM865 529.5V544.8h1V529.5zM866 529.8V543.9h1V529.8zM867 529.5V544.5h1V529.5zM868 529.8V544.2h1V529.8zM869 529.8V545.6h1V529.8zM870 529.8V545.3h1V529.8zM871 529.8V545.2h1V529.8zM872 529.5V544.1h1V529.5zM873 529.5V545.0h1V529.5zM874 529.8V544.5h1V529.8zM875 529.8V546.3h1V529.8zM876 529.8V546.1h1V529.8zM877 530.2V544.6h1V530.2zM878 529.8V544.3h1V529.8zM879 529.8V544.6h1V529.8zM880 529.8V544.3h1V529.8zM881 529.8V546.2h1V529.8zM882 529.8V545.1h1V529.8zM883 529.8V545.5h1V529.8zM884 529.8V544.8h1V529.8zM885 530.2V544.4h1V530.2zM886 529.8V543.7h1V529.8zM887 529.5V543.8h1V529.5zM888 529.5V544.4h1V529.5zM889 529.5V544.2h1V529.5zM890 529.8V544.6h1V529.8zM891 529.5V544.8h1V529.5zM892 529.8V545.9h1V529.8zM893 529.8V546.5h1V529.8zM894 529.8V546.2h1V529.8zM895 529.8V544.6h1V529.8zM896 529.8V544.3h1V529.8zM897 530.2V545.7h1V530.2zM898 529.8V545.8h1V529.8zM899 529.8V546.4h1V529.8zM900 529.8V545.7h1V529.8zM901 529.8V546.9h1V529.8zM902 529.8V545.4h1V529.8zM903 529.8V546.2h1V529.8zM904 530.2V545.6h1V530.2zM905 529.8V544.8h1V529.8zM906 530.2V544.9h1V530.2zM907 529.5V545.0h1V529.5zM908 530.2V546.0h1V530.2zM909 529.8V544.5h1V529.8zM910 529.8V545.2h1V529.8zM911 529.5V546.1h1V529.5zM912 530.2V545.1h1V530.2zM913 530.2V545.0h1V530.2zM914 529.8V546.0h1V529.8zM915 529.8V547.0h1V529.8zM916 529.8V545.0h1V529.8zM917 529.8V546.0h1V529.8zM918 529.8V550.0h1V529.8zM919 530.2V548.5h1V530.2zM920 529.8V545.3h1V529.8zM921 529.5V544.1h1V529.5zM922 529.5V544.6h1V529.5zM923 529.8V543.8h1V529.8zM924 529.8V545.4h1V529.8zM925 529.8V545.2h1V529.8zM926 530.2V544.1h1V530.2zM927 529.8V544.5h1V529.8zM928 529.8V544.8h1V529.8zM929 529.8V543.9h1V529.8zM930 529.8V543.9h1V529.8zM931 529.8V545.0h1V529.8zM932 529.8V545.0h1V529.8zM933 530.2V546.5h1V530.2zM934 529.5V547.2h1V529.5zM935 529.8V549.6h1V529.8zM936 529.5V547.3h1V529.5zM937 530.2V545.7h1V530.2zM938 530.2V545.3h1V530.2zM939 529.8V546.7h1V529.8zM940 529.5V545.8h1V529.5zM941 529.8V545.4h1V529.8zM942 529.8V546.2h1V529.8zM943 529.8V545.6h1V529.8zM944 529.8V546.3h1V529.8zM945 529.8V546.7h1V529.8zM946 529.8V545.3h1V529.8zM947 529.5V546.2h1V529.5zM948 529.8V545.6h1V529.8zM949 530.2V544.8h1V530.2zM950 529.8V545.9h1V529.8zM951 529.8V544.9h1V529.8zM952 529.8V544.5h1V529.8zM953 530.2V544.7h1V530.2zM954 530.2V544.9h1V530.2zM955 529.5V544.9h1V529.5zM956 529.8V544.5h1V529.8zM957 529.8V550.2h1V529.8zM958 529.8V544.6h1V529.8zM959 529.8V543.8h1V529.8zM960 530.2V544.4h1V530.2zM961 529.5V546.7h1V529.5zM962 529.8V545.9h1V529.8zM963 529.8V545.9h1V529.8zM964 529.8V545.5h1V529.8zM965 529.5V544.2h1V529.5zM966 529.8V544.6h1V529.8zM967 529.8V544.3h1V529.8zM968 530.2V545.7h1V530.2zM969 529.8V545.8h1V529.8zM970 529.8V546.9h1V529.8zM971 530.2V547.5h1V530.2zM972 529.8V545.7h1V529.8zM973 529.8V544.9h1V529.8zM974 529.8V546.4h1V529.8zM975 529.8V545.7h1V529.8zM976 529.8V544.4h1V529.8zM977 529.5V543.7h1V529.5zM978 530.2V543.3h1V530.2zM979 529.5V544.2h1V529.5zM980 529.8V545.1h1V529.8zM981 529.8V544.0h1V529.8zM982 529.8V545.5h1V529.8zM983 530.2V544.8h1V530.2zM984 529.8V546.4h1V529.8zM985 529.8V546.2h1V529.8zM986 529.8V545.6h1V529.8zM987 529.8V545.3h1V529.8zM988 529.8V546.1h1V529.8zM989 530.2V545.1h1V530.2zM990 529.8V546.5h1V529.8zM991 529.5V547.8h1V529.5zM992 530.2V544.4h1V530.2zM993 529.5V544.2h1V529.5zM994 529.5V546.1h1V529.5zM995 529.8V544.5h1V529.8zM996 530.2V544.3h1V530.2zM997 529.8V546.1h1V529.8zM998 530.2V545.1h1V530.2zM999 529.8V546.5h1V529.8zM1000 529.8V547.3h1V529.8zM1001 529.5V545.6h1V529.5zM1002 529.5V546.3h1V529.5zM1003 529.8V544.7h1V529.8zM1004 529.8V543.8h1V529.8zM1005 529.8V543.4h1V529.8zM1006 529.8V544.2h1V529.8zM1007 529.5V545.6h1V529.5zM1008 530.2V544.3h1V530.2zM1009 529.8V544.2h1V529.8zM1010 529.8V545.1h1V529.8zM1011 529.8V544.5h1V529.8zM1012 529.8V544.3h1V529.8zM1013 529.5V544.6h1V529.5zM1014 529.8V549.8h1V529.8zM1015 530.2V544.9h1V530.2zM1016 529.8V546.0h1V529.8zM1017 529.8V546.0h1V529.8zM1018 529.8V545.0h1V529.8zM1019 529.8V545.0h1V529.8zM1020 530.2V545.5h1V530.2zM1021 529.8V549.7h1V529.8zM1022 529.5V544.9h1V529.5zM1023 530.2V544.9h1V530.2zM1024 529.8V544.0h1V529.8zM1025 529.8V544.0h1V529.8zM1026 529.8V544.0h1V529.8zM1027 530.2V544.5h1V530.2zM1028 529.8V548.2h1V529.8zM1029 529.8V544.6h1V529.8zM1030 530.2V545.3h1V530.2zM1031 529.8V546.2h1V529.8zM1032 529.8V546.1h1V529.8zM1033 529.8V545.5h1V529.8zM1034 529.5V544.8h1V529.5zM1035 530.2V545.4h1V530.2zM1036 529.8V546.7h1V529.8zM1037 529.8V545.8h1V529.8zM1038 529.5V544.9h1V529.5zM1039 529.8V544.0h1V529.8zM1040 529.8V544.0h1V529.8zM1041 529.8V544.5h1V529.8zM1042 529.8V544.7h1V529.8zM1043 529.8V544.9h1V529.8zM1044 529.5V544.4h1V529.5zM1045 529.8V545.7h1V529.8zM1046 529.8V544.4h1V529.8zM1047 529.8V544.2h1V529.8zM1048 529.5V544.6h1V529.5zM1049 529.8V544.3h1V529.8zM1050 530.2V544.1h1V530.2zM1051 529.8V546.1h1V529.8zM1052 529.8V546.5h1V529.8zM1053 529.8V545.8h1V529.8zM1054 529.8V545.4h1V529.8zM1055 529.8V544.7h1V529.8zM1056 529.5V544.8h1V529.5zM1057 529.8V544.4h1V529.8zM1058 530.2V544.7h1V530.2zM1059 529.5V544.9h1V529.5zM1060 529.8V544.9h1V529.8zM1061 529.8V545.5h1V529.8zM1062 529.8V545.7h1V529.8zM1063 529.8V545.9h1V529.8zM1064 529.8V545.4h1V529.8zM1065 529.8V546.2h1V529.8zM1066 529.8V545.6h1V529.8zM1067 529.8V545.3h1V529.8zM1068 529.8V544.2h1V529.8zM1069 530.2V545.1h1V530.2zM1070 530.2V546.5h1V530.2zM1071 530.2V547.3h1V530.2zM1072 530.2V547.6h1V530.2zM1073 530.2V547.8h1V530.2zM1074 529.8V546.4h1V529.8zM1075 529.8V546.2h1V529.8zM1076 529.5V545.6h1V529.5zM1077 529.5V546.3h1V529.5zM1078 529.5V544.7h1V529.5zM1079 529.5V545.3h1V529.5zM1080 530.2V545.2h1V530.2zM1081 529.8V544.6h1V529.8zM1082 529.8V544.3h1V529.8zM1083 529.8V544.1h1V529.8zM1084 530.2V544.6h1V530.2zM1085 529.5V543.8h1V529.5zM1086 529.8V544.4h1V529.8zM1087 529.5V544.2h1V529.5zM1088 530.2V545.1h1V530.2zM1089 529.8V548.0h1V529.8zM1090 529.8V546.5h1V529.8zM1091 529.8V547.3h1V529.8zM1092 529.8V546.6h1V529.8zM1093 530.2V544.8h1V530.2zM1094 529.8V546.4h1V529.8zM1095 529.8V547.2h1V529.8zM1096 529.5V546.1h1V529.5zM1097 529.8V545.6h1V529.8zM1098 529.8V545.3h1V529.8zM1099 529.8V546.1h1V529.8zM1100 529.8V546.1h1V529.8zM1101 529.8V545.0h1V529.8zM1102 529.5V546.5h1V529.5zM1103 530.2V545.3h1V530.2zM1104 529.8V545.1h1V529.8zM1105 529.8V544.6h1V529.8zM1106 529.8V544.8h1V529.8zM1107 529.5V546.4h1V529.5zM1108 529.5V545.7h1V529.5zM1109 529.8V546.3h1V529.8zM1110 529.8V544.7h1V529.8zM1111 529.8V544.3h1V529.8zM1112 529.8V545.7h1V529.8zM1113 529.5V544.8h1V529.5zM1114 529.5V545.4h1V529.5zM1115 529.8V546.2h1V529.8zM1116 529.5V546.6h1V529.5zM1117 529.8V545.8h1V529.8zM1118 529.8V544.9h1V529.8zM1119 529.5V546.5h1V529.5zM1120 529.8V547.2h1V529.8zM1121 529.8V547.6h1V529.8zM1122 530.2V545.8h1V530.2zM1123 529.5V546.4h1V529.5zM1124 529.8V546.2h1V529.8zM1125 530.2V547.1h1V530.2zM1126 529.8V546.1h1V529.8zM1127 529.8V545.0h1V529.8zM1128 530.2V544.5h1V530.2zM1129 529.8V545.3h1V529.8zM1130 529.8V544.6h1V529.8zM1131 529.8V544.3h1V529.8zM1132 529.8V544.7h1V529.8zM1133 529.5V544.8h1V529.5zM1134 529.8V544.4h1V529.8zM1135 530.2V543.7h1V530.2zM1136 529.5V545.4h1V529.5zM1137 529.8V544.7h1V529.8zM1138 529.8V546.8h1V529.8zM1139 529.8V544.9h1V529.8zM1140 529.8V544.0h1V529.8zM1141 529.8V544.0h1V529.8zM1142 529.5V545.0h1V529.5zM1143 530.2V545.0h1V530.2zM1144 529.8V544.5h1V529.8zM1145 529.5V543.7h1V529.5zM1146 529.8V544.9h1V529.8zM1147 529.8V544.9h1V529.8zM1148 529.8V544.5h1V529.8zM1149 530.2V544.7h1V530.2zM1150 529.8V544.4h1V529.8zM1151 529.8V544.2h1V529.8zM1152 530.2V546.1h1V530.2zM1153 529.5V545.0h1V529.5zM1154 529.5V546.0h1V529.5zM1155 529.5V545.5h1V529.5zM1156 530.2V545.3h1V530.2zM1157 530.2V545.6h1V530.2zM1158 529.8V544.3h1V529.8zM1159 529.8V546.2h1V529.8zM1160 529.8V545.6h1V529.8zM1161 529.8V544.8h1V529.8zM1162 529.8V544.9h1V529.8zM1163 529.8V543.9h1V529.8zM1164 529.8V549.5h1V529.8zM1165 529.8V544.2h1V529.8zM1166 529.8V549.1h1V529.8zM1167 529.8V546.1h1V529.8zM1168 529.5V545.5h1V529.5zM1169 529.8V546.3h1V529.8zM1170 529.8V545.6h1V529.8zM1171 530.2V545.8h1V530.2zM1172 529.8V544.4h1V529.8zM1173 529.8V544.7h1V529.8zM1174 529.8V544.4h1V529.8zM1175 529.8V544.7h1V529.8zM1176 529.8V545.8h1V529.8zM1177 530.2V544.9h1V530.2zM1178 529.8V544.0h1V529.8zM1179 529.8V544.0h1V529.8zM1180 529.8V545.5h1V529.8zM1181 530.2V546.2h1V530.2zM1182 529.8V545.6h1V529.8zM1183 529.8V544.8h1V529.8zM1184 530.2V546.4h1V530.2zM1185 529.5V545.7h1V529.5zM1186 529.8V544.9h1V529.8zM1187 529.8V545.4h1V529.8zM1188 529.8V546.7h1V529.8zM1189 529.8V546.4h1V529.8zM1190 529.8V545.7h1V529.8zM1191 529.8V545.3h1V529.8zM1192 529.8V544.2h1V529.8zM1193 529.8V545.1h1V529.8zM1194 529.8V545.0h1V529.8zM1195 530.2V546.0h1V530.2zM1196 529.8V546.5h1V529.8zM1197 529.8V544.8h1V529.8zM1198 529.8V544.4h1V529.8zM1199 529.5V545.2h1V529.5zM1200 529.8V545.1h1V529.8zM1201 529.8V545.5h1V529.8zM1202 529.8V544.8h1V529.8zM1203 529.5V543.9h1V529.5zM1204 530.2V544.9h1V530.2zM1205 529.8V545.5h1V529.8zM1206 529.8V544.7h1V529.8zM1207 529.8V544.9h1V529.8zM1208 529.8V546.4h1V529.8zM1209 530.2V546.7h1V530.2zM1210 530.2V545.9h1V530.2zM1211 530.2V545.9h1V530.2zM1212 529.8V546.0h1V529.8zM1213 529.5V545.0h1V529.5zM1214 529.8V545.0h1V529.8zM1215 529.5V545.5h1V529.5zM1216 529.8V544.2h1V529.8zM1217 530.2V543.6h1V530.2zM1218 529.8V543.8h1V529.8zM1219 529.8V543.9h1V529.8zM1220 529.5V543.5h1V529.5zM1221 530.2V543.7h1V530.2zM1222 529.8V545.4h1V529.8zM1223 529.8V544.7h1V529.8zM1224 529.8V544.3h1V529.8zM1225 529.5V544.2h1V529.5zM1226 529.5V544.1h1V529.5zM1227 529.8V543.5h1V529.8zM1228 529.5V544.3h1V529.5zM1229 529.5V544.6h1V529.5zM1230 530.2V543.8h1V530.2zM1231 529.8V544.4h1V529.8zM1232 529.5V546.2h1V529.5zM1233 529.8V545.1h1V529.8zM1234 529.5V545.1h1V529.5zM1235 529.8V544.5h1V529.8zM1236 529.5V544.3h1V529.5zM1237 529.5V544.6h1V529.5zM1238 529.5V543.8h1V529.5zM1239 530.2V543.9h1V530.2zM1240 530.2V544.0h1V530.2zM1241 529.8V545.0h1V529.8zM1242 529.8V545.0h1V529.8zM1243 529.8V546.0h1V529.8zM1244 529.8V547.0h1V529.8zM1245 529.5V546.5h1V529.5zM1246 529.8V546.7h1V529.8zM1247 529.5V547.4h1V529.5zM1248 530.2V546.2h1V530.2zM1249 529.8V545.1h1V529.8zM1250 530.2V544.5h1V530.2zM1251 530.2V545.3h1V530.2zM1252 530.2V544.6h1V530.2zM1253 529.5V548.8h1V529.5zM1254 530.2V544.9h1V530.2zM1255 530.2V546.0h1V530.2zM1256 529.5V544.5h1V529.5zM1257 529.8V545.7h1V529.8zM1258 529.5V545.4h1V529.5zM1259 529.5V546.2h1V529.5zM1260 529.8V545.1h1V529.8zM1261 529.5V545.5h1V529.5zM1262 530.2V545.3h1V530.2zM1263 529.8V545.6h1V529.8zM1264 529.8V545.8h1V529.8zM1265 529.5V548.4h1V529.5zM1266 529.8V545.7h1V529.8zM1267 529.5V544.4h1V529.5zM1268 529.8V546.2h1V529.8zM1269 530.2V544.6h1V530.2zM1270 529.8V544.3h1V529.8zM1271 529.8V543.6h1V529.8zM1272 529.8V543.8h1V529.8zM1273 529.8V545.4h1V529.8zM1274 530.2V546.2h1V530.2zM1275 529.8V545.1h1V529.8zM1276 529.8V544.1h1V529.8zM1277 529.8V545.0h1V529.8zM1278 529.8V544.5h1V529.8zM1279 529.8V544.8h1V529.8zM1280 529.8V545.4h1V529.8zM1281 529.8V546.2h1V529.8zM1282 529.8V547.1h1V529.8zM1283 529.8V545.5h1V529.8zM1284 529.8V544.3h1V529.8zM1285 529.8V546.1h1V529.8zM1286 529.8V547.1h1V529.8zM1287 529.5V546.5h1V529.5zM1288 529.8V544.8h1V529.8zM1289 529.5V544.4h1V529.5zM1290 530.2V544.2h1V530.2zM1291 529.5V543.6h1V529.5zM1292 530.2V544.3h1V530.2zM1293 530.2V545.1h1V530.2zM1294 529.5V544.6h1V529.5zM1295 529.8V544.8h1V529.8zM1296 529.5V543.9h1V529.5zM1297 529.8V544.9h1V529.8zM1298 529.8V545.5h1V529.8zM1299 530.2V545.2h1V530.2zM1300 530.2V544.1h1V530.2zM1301 529.5V545.6h1V529.5zM1302 529.5V546.3h1V529.5zM1303 529.8V545.1h1V529.8zM1304 529.8V546.1h1V529.8zM1305 529.8V545.0h1V529.8zM1306 529.8V549.5h1V529.8zM1307 529.8V544.8h1V529.8zM1308 529.8V545.4h1V529.8zM1309 529.5V546.2h1V529.5zM1310 529.8V547.1h1V529.8zM1311 530.2V547.5h1V530.2zM1312 529.8V546.3h1V529.8zM1313 529.8V546.1h1V529.8zM1314 529.8V545.6h1V529.8zM1315 530.2V548.8h1V530.2zM1316 529.8V545.9h1V529.8zM1317 529.8V545.4h1V529.8zM1318 529.8V544.7h1V529.8zM1319 529.8V544.9h1V529.8zM1320 529.8V546.4h1V529.8zM1321 529.8V545.7h1V529.8zM1322 529.8V545.4h1V529.8zM1323 530.2V546.7h1V530.2zM1324 530.2V546.3h1V530.2zM1325 530.2V545.7h1V530.2zM1326 529.5V545.3h1V529.5zM1327 529.5V544.7h1V529.5zM1328 529.8V544.3h1V529.8zM1329 530.2V544.7h1V530.2zM1330 529.5V546.3h1V529.5zM1331 529.8V545.2h1V529.8zM1332 529.8V546.1h1V529.8zM1333 530.2V545.5h1V530.2zM1334 529.5V544.8h1V529.5zM1335 529.8V544.9h1V529.8zM1336 530.2V545.4h1V530.2zM1337 529.8V546.7h1V529.8zM1338 529.8V545.4h1V529.8zM1339 529.8V545.2h1V529.8zM1340 529.8V544.6h1V529.8zM1341 529.5V544.3h1V529.5zM1342 529.8V544.6h1V529.8zM1343 529.8V544.3h1V529.8zM1344 529.5V543.7h1V529.5zM1345 529.8V544.3h1V529.8zM1346 529.8V545.7h1V529.8zM1347 529.5V546.8h1V529.5zM1348 529.8V544.9h1V529.8zM1349 529.8V545.5h1V529.8zM1350 530.2V544.2h1V530.2zM1351 530.2V544.1h1V530.2zM1352 529.5V544.1h1V529.5zM1353 529.8V543.5h1V529.8zM1354 529.5V545.3h1V529.5zM1355 529.8V544.6h1V529.8zM1356 529.8V544.3h1V529.8zM1357 529.8V544.2h1V529.8zM1358 529.8V544.6h1V529.8zM1359 529.8V546.3h1V529.8zM1360 529.8V544.6h1V529.8zM1361 529.8V543.8h1V529.8zM1362 529.8V543.9h1V529.8zM1363 530.2V545.5h1V530.2zM1364 529.8V544.2h1V529.8zM1365 529.8V543.6h1V529.8zM1366 529.8V543.8h1V529.8zM1367 529.8V544.9h1V529.8zM1368 529.8V544.5h1V529.8zM1369 529.8V544.2h1V529.8zM1370 529.8V544.1h1V529.8zM1371 529.8V543.6h1V529.8zM1372 529.8V543.3h1V529.8zM1373 529.8V543.1h1V529.8zM1374 529.8V545.1h1V529.8zM1375 529.8V546.0h1V529.8zM1376 529.8V545.5h1V529.8zM1377 529.8V546.3h1V529.8zM1378 529.8V545.6h1V529.8zM1379 529.8V545.3h1V529.8zM1380 529.8V544.2h1V529.8zM1381 530.2V544.1h1V530.2zM1382 529.8V544.5h1V529.8zM1383 529.8V545.8h1V529.8zM1384 529.8V545.4h1V529.8zM1385 529.5V546.7h1V529.5zM1386 530.2V545.3h1V530.2zM1387 530.2V544.7h1V530.2zM1388 529.8V543.8h1V529.8zM1389 529.8V544.9h1V529.8zM1390 529.5V545.0h1V529.5zM1391 529.8V546.0h1V529.8zM1392 529.8V547.0h1V529.8zM1393 529.8V545.5h1V529.8zM1394 529.8V544.7h1V529.8zM1395 529.8V544.4h1V529.8zM1396 529.8V543.7h1V529.8zM1397 529.8V544.3h1V529.8zM1398 529.5V546.2h1V529.5zM1399 529.5V545.6h1V529.5zM1400 530.2V545.8h1V530.2zM1401 529.5V545.4h1V529.5zM1402 529.5V544.7h1V529.5zM1403 530.2V547.3h1V530.2zM1404 529.8V544.2h1V529.8zM1405 530.2V545.1h1V530.2zM1406 529.5V546.0h1V529.5zM1407 530.2V544.5h1V530.2zM1408 529.8V544.8h1V529.8zM1409 529.8V546.4h1V529.8zM1410 529.8V545.7h1V529.8zM1411 529.8V545.8h1V529.8zM1412 529.5V544.4h1V529.5zM1413 529.8V545.7h1V529.8zM1414 529.8V545.4h1V529.8zM1415 529.8V544.7h1V529.8zM1416 529.8V544.8h1V529.8zM1417 529.8V545.4h1V529.8zM1418 529.8V546.2h1V529.8zM1419 529.8V545.1h1V529.8zM1420 529.8V547.6h1V529.8zM1421 529.8V546.3h1V529.8zM1422 529.8V545.1h1V529.8zM1423 530.2V546.1h1V530.2zM1424 529.8V546.5h1V529.8zM1425 529.8V546.3h1V529.8zM1426 529.8V545.1h1V529.8zM1427 529.8V550.1h1V529.8zM1428 529.5V545.0h1V529.5zM1429 529.8V545.0h1V529.8zM1430 529.8V547.5h1V529.8zM1431 529.5V544.3h1V529.5zM1432 529.8V544.6h1V529.8zM1433 529.8V543.8h1V529.8zM1434 529.8V545.4h1V529.8zM1435 529.8V545.7h1V529.8zM1436 529.8V545.4h1V529.8zM1437 530.2V546.7h1V530.2zM1438 530.2V547.3h1V530.2zM1439 529.8V547.7h1V529.8zM1440 529.8V545.8h1V529.8zM1441 530.2V544.9h1V530.2zM1442 529.8V544.5h1V529.8zM1443 529.8V548.2h1V529.8zM1444 529.5V546.6h1V529.5zM1445 529.8V546.3h1V529.8zM1446 529.8V547.2h1V529.8zM1447 529.5V546.1h1V529.5zM1448 529.8V546.0h1V529.8zM1449 529.5V545.5h1V529.5zM1450 529.5V545.8h1V529.5zM1451 529.5V545.9h1V529.5zM1452 529.8V545.9h1V529.8zM1453 529.8V545.5h1V529.8zM1454 529.8V546.7h1V529.8zM1455 529.8V545.4h1V529.8zM1456 529.8V545.7h1V529.8zM1457 529.8V546.3h1V529.8zM1458 530.2V544.7h1V530.2zM1459 529.8V544.3h1V529.8zM1460 529.8V544.7h1V529.8zM1461 529.8V544.3h1V529.8zM1462 529.8V544.2h1V529.8zM1463 529.5V544.1h1V529.5zM1464 529.8V544.5h1V529.8zM1465 529.5V544.8h1V529.5zM1466 529.8V544.4h1V529.8zM1467 530.2V546.2h1V530.2zM1468 529.8V545.1h1V529.8zM1469 529.8V544.5h1V529.8zM1470 529.8V545.8h1V529.8zM1471 530.2V543.9h1V530.2zM1472 530.2V544.4h1V530.2zM1473 529.8V545.2h1V529.8zM1474 529.8V545.6h1V529.8zM1475 529.8V544.8h1V529.8zM1476 529.8V544.9h1V529.8zM1477 529.8V545.0h1V529.8zM1478 529.5V545.0h1V529.5zM1479 529.8V545.0h1V529.8zM1480 529.5V546.5h1V529.5zM1481 530.2V547.2h1V530.2zM1482 529.8V546.1h1V529.8zM1483 529.5V545.6h1V529.5zM1484 530.2V544.3h1V530.2zM1485 530.2V545.1h1V530.2zM1486 529.5V551.6h1V529.5zM1487 529.8V546.8h1V529.8zM1488 530.2V546.9h1V530.2zM1489 530.2V545.4h1V530.2zM1490 529.8V545.2h1V529.8zM1491 529.8V544.6h1V529.8zM1492 529.8V546.3h1V529.8zM1493 529.5V545.7h1V529.5zM1494 529.8V545.3h1V529.8zM1495 529.5V544.7h1V529.5zM1496 529.8V544.3h1V529.8zM1497 530.2V546.2h1V530.2zM1498 530.2V545.6h1V530.2zM1499 530.2V544.8h1V530.2zM1500 529.8V544.9h1V529.8zM1501 530.2V544.9h1V530.2zM1502 529.5V545.0h1V529.5zM1503 529.5V545.0h1V529.5zM1504 530.2V546.5h1V530.2zM1505 530.2V543.7h1V530.2zM1506 529.5V543.9h1V529.5zM1507 529.8V544.4h1V529.8zM1508 529.8V545.2h1V529.8zM1509 529.8V545.1h1V529.8zM1510 529.8V544.1h1V529.8zM1511 529.8V544.5h1V529.8zM1512 529.8V544.3h1V529.8zM1513 529.8V543.6h1V529.8zM1514 529.8V544.8h1V529.8zM1515 530.2V544.4h1V530.2zM1516 529.8V545.2h1V529.8zM1517 530.2V544.1h1V530.2zM1518 529.8V543.6h1V529.8zM1519 530.2V545.3h1V530.2zM1520 529.8V546.6h1V529.8zM1521 529.5V547.3h1V529.5zM1522 530.2V546.2h1V530.2zM1523 529.8V547.1h1V529.8zM1524 529.5V545.5h1V529.5zM1525 530.2V549.3h1V530.2zM1526 530.2V544.1h1V530.2zM1527 529.8V544.6h1V529.8zM1528 529.8V544.3h1V529.8zM1529 529.8V547.6h1V529.8zM1530 529.8V544.8h1V529.8zM1531 529.8V544.4h1V529.8zM1532 529.8V544.2h1V529.8zM1533 529.8V549.6h1V529.8zM1534 529.8V544.3h1V529.8zM1535 529.5V545.7h1V529.5zM1536 529.5V546.8h1V529.5zM1537 530.2V545.4h1V530.2zM1538 530.2V545.2h1V530.2zM1539 530.2V546.1h1V530.2zM1540 529.8V545.1h1V529.8zM1541 530.2V545.0h1V530.2zM1542 529.8V546.5h1V529.8zM1543 529.8V546.3h1V529.8zM1544 529.8V546.6h1V529.8zM1545 529.8V545.3h1V529.8zM1546 529.8V544.2h1V529.8zM1547 529.8V546.1h1V529.8zM1548 529.8V545.0h1V529.8zM1549 529.8V546.0h1V529.8zM1550 529.8V549.5h1V529.8zM1551 529.8V544.3h1V529.8zM1552 529.8V544.1h1V529.8zM1553 530.2V544.6h1V530.2zM1554 529.8V544.3h1V529.8zM1555 530.2V544.6h1V530.2zM1556 529.8V545.8h1V529.8zM1557 529.8V545.4h1V529.8zM1558 529.8V549.2h1V529.8zM1559 529.5V546.1h1V529.5zM1560 529.5V545.1h1V529.5zM1561 530.2V545.5h1V530.2zM1562 529.8V545.3h1V529.8zM1563 529.8V546.1h1V529.8zM1564 529.8V545.6h1V529.8zM1565 529.8V545.3h1V529.8zM1566 529.8V544.1h1V529.8zM1567 529.8V545.1h1V529.8zM1568 529.8V546.0h1V529.8zM1569 529.8V545.5h1V529.8zM1570 529.8V546.8h1V529.8zM1571 530.2V544.9h1V530.2zM1572 530.2V545.9h1V530.2zM1573 529.5V545.5h1V529.5zM1574 530.2V546.2h1V530.2zM1575 529.5V546.1h1V529.5zM1576 529.8V545.1h1V529.8zM1577 529.8V544.5h1V529.8zM1578 530.2V546.3h1V530.2zM1579 529.8V545.1h1V529.8zM1580 529.8V544.6h1V529.8zM1581 529.5V544.8h1V529.5zM1582 529.5V544.4h1V529.5zM1583 529.8V545.2h1V529.8zM1584 529.8V544.6h1V529.8zM1585 529.8V545.8h1V529.8zM1586 529.8V546.9h1V529.8zM1587 529.8V545.4h1V529.8zM1588 530.2V545.2h1V530.2zM1589 529.8V546.6h1V529.8zM1590 529.5V545.3h1V529.5zM1591 529.8V544.2h1V529.8zM1592 529.8V543.6h1V529.8zM1593 530.2V543.8h1V530.2zM1594 529.5V545.9h1V529.5zM1595 529.8V545.4h1V529.8zM1596 529.8V546.2h1V529.8zM1597 529.5V551.1h1V529.5zM1598 529.8V548.1h1V529.8zM1599 529.8V545.0h1V529.8zM1600 530.2V546.5h1V530.2zM1601 529.8V545.3h1V529.8zM1602 529.8V545.1h1V529.8zM1603 529.8V545.1h1V529.8zM1604 529.8V545.0h1V529.8zM1605 530.2V546.5h1V530.2zM1606 529.8V544.8h1V529.8zM1607 529.8V549.4h1V529.8zM1608 530.2V545.2h1V530.2zM1609 529.8V546.1h1V529.8zM1610 530.2V546.5h1V530.2zM1611 529.5V544.8h1V529.5zM1612 530.2V544.9h1V530.2zM1613 529.8V544.4h1V529.8zM1614 530.2V546.2h1V530.2zM1615 529.5V546.6h1V529.5zM1616 530.2V545.8h1V530.2zM1617 530.2V546.4h1V530.2zM1618 530.2V545.2h1V530.2zM1619 529.5V544.1h1V529.5zM1620 530.2V547.6h1V530.2zM1621 529.5V544.8h1V529.5zM1622 530.2V544.9h1V530.2zM1623 530.2V544.4h1V530.2zM1624 529.5V543.7h1V529.5zM1625 529.8V545.4h1V529.8zM1626 529.8V546.2h1V529.8zM1627 529.5V545.1h1V529.5zM1628 529.8V544.0h1V529.8zM1629 529.8V544.0h1V529.8zM1630 529.8V549.5h1V529.8zM1631 529.8V544.8h1V529.8zM1632 529.8V545.4h1V529.8zM1633 529.8V545.2h1V529.8zM1634 529.8V544.6h1V529.8zM1635 529.5V544.8h1V529.5zM1636 529.5V544.9h1V529.5zM1637 529.8V544.4h1V529.8zM1638 530.2V544.2h1V530.2zM1639 529.8V545.6h1V529.8zM1640 529.5V544.3h1V529.5zM1641 530.2V544.2h1V530.2zM1642 529.8V544.1h1V529.8zM1643 529.8V543.5h1V529.8zM1644 529.8V543.8h1V529.8zM1645 529.5V544.9h1V529.5zM1646 529.8V545.4h1V529.8zM1647 529.8V546.7h1V529.8zM1648 529.5V545.4h1V529.5zM1649 529.8V545.2h1V529.8zM1650 529.8V545.1h1V529.8zM1651 529.8V545.5h1V529.8zM1652 530.2V544.8h1V530.2zM1653 529.8V545.9h1V529.8zM1654 529.8V544.9h1V529.8zM1655 529.8V546.0h1V529.8zM1656 530.2V544.5h1V530.2zM1657 530.2V547.2h1V530.2zM1658 529.8V544.6h1V529.8zM1659 529.8V546.3h1V529.8zM1660 529.8V546.7h1V529.8zM1661 529.8V545.8h1V529.8zM1662 530.2V545.9h1V530.2zM1663 530.2V545.5h1V530.2zM1664 529.8V546.7h1V529.8zM1665 530.2V545.9h1V530.2zM1666 529.8V545.4h1V529.8zM1667 529.8V546.2h1V529.8zM1668 530.2V546.6h1V530.2zM1669 530.2V545.3h1V530.2zM1670 529.8V546.2h1V529.8zM1671 530.2V545.1h1V530.2zM1672 530.2V545.0h1V530.2zM1673 530.2V544.5h1V530.2zM1674 529.5V543.8h1V529.5zM1675 529.8V545.9h1V529.8zM1676 530.2V544.4h1V530.2zM1677 529.8V544.2h1V529.8zM1678 529.8V545.6h1V529.8zM1679 529.5V546.8h1V529.5zM1680 530.2V545.4h1V530.2zM1681 529.5V544.7h1V529.5zM1682 530.2V545.4h1V530.2zM1683 529.8V545.2h1V529.8zM1684 529.5V546.1h1V529.5zM1685 529.8V547.0h1V529.8zM1686 530.2V546.0h1V530.2zM1687 529.8V546.0h1V529.8zM1688 529.8V545.5h1V529.8zM1689 530.2V546.3h1V530.2zM1690 529.8V545.1h1V529.8zM1691 529.8V546.1h1V529.8zM1692 529.8V546.0h1V529.8zM1693 529.8V546.5h1V529.8zM1694 529.8V547.3h1V529.8zM1695 530.2V546.1h1V530.2zM1696 529.8V545.1h1V529.8zM1697 530.2V545.5h1V530.2zM1698 529.5V546.3h1V529.5zM1699 529.8V545.6h1V529.8zM1700 529.8V545.3h1V529.8zM1701 529.5V545.7h1V529.5zM1702 529.8V549.3h1V529.8zM1703 530.2V545.2h1V530.2zM1704 529.5V545.1h1V529.5zM1705 529.8V546.5h1V529.8zM1706 530.2V545.3h1V530.2zM1707 529.5V544.1h1V529.5zM1708 530.2V545.1h1V530.2zM1709 529.5V545.0h1V529.5zM1710 530.2V545.0h1V530.2zM1711 529.8V545.0h1V529.8zM1712 530.2V545.0h1V530.2zM1713 529.5V544.5h1V529.5zM1714 529.8V545.8h1V529.8zM1715 529.8V545.9h1V529.8zM1716 529.5V544.9h1V529.5zM1717 529.8V544.5h1V529.8z"/><rect x="517" y="529" width="1.6" height="58" fill="#00a9ce"/></svg>
<div class="t" style="left:520.3px;top:616.91px;font-size:10.5px;line-height:10.5px;color:#546e7a;font-weight:400;transform:scaleX(0.9315);transform-origin:left 0;"><span id="t53" data-m="1">WINDOW</span></div>
<div class="a" style="left:517px;top:628px;width:598px;height:64px;background:#ffffff;border:1px solid #cfd8dc;box-sizing:border-box;"></div>
<div class="a" style="left:666px;top:628px;width:1px;height:64px;background:#cfd8dc;"></div>
<div class="a" style="left:815px;top:628px;width:1px;height:64px;background:#cfd8dc;"></div>
<div class="a" style="left:964px;top:628px;width:1px;height:64px;background:#cfd8dc;"></div>
<div class="t" style="left:-7.5px;width:1200px;text-align:center;top:642.80px;font-size:21.5px;line-height:21.5px;color:#3e4f58;font-weight:400;transform:scaleX(0.96);transform-origin:center 0;"><span id="t54">89.25<span style="font-size:13.5px">mA</span></span></div>
<div class="t" style="left:-7.5px;width:1200px;text-align:center;top:670.22px;font-size:10.6px;line-height:10.6px;color:#4e6069;font-weight:400;letter-spacing:0.2px;"><span id="t55">average</span></div>
<div class="t" style="left:141.5px;width:1200px;text-align:center;top:642.80px;font-size:21.5px;line-height:21.5px;color:#3e4f58;font-weight:400;transform:scaleX(0.96);transform-origin:center 0;"><span id="t56">109.04<span style="font-size:13.5px">mA</span></span></div>
<div class="t" style="left:141.5px;width:1200px;text-align:center;top:670.22px;font-size:10.6px;line-height:10.6px;color:#4e6069;font-weight:400;letter-spacing:0.2px;"><span id="t57">max</span></div>
<div class="t" style="left:290.5px;width:1200px;text-align:center;top:642.80px;font-size:21.5px;line-height:21.5px;color:#3e4f58;font-weight:400;transform:scaleX(0.96);transform-origin:center 0;"><span id="t58">23.43<span style="font-size:13.5px">s</span></span></div>
<div class="t" style="left:290.5px;width:1200px;text-align:center;top:670.22px;font-size:10.6px;line-height:10.6px;color:#4e6069;font-weight:400;letter-spacing:0.2px;"><span id="t59">time</span></div>
<div class="t" style="left:439.5px;width:1200px;text-align:center;top:642.80px;font-size:21.5px;line-height:21.5px;color:#3e4f58;font-weight:400;transform:scaleX(0.96);transform-origin:center 0;"><span id="t60">2.09<span style="font-size:13.5px">C</span></span></div>
<div class="t" style="left:439.5px;width:1200px;text-align:center;top:670.22px;font-size:10.6px;line-height:10.6px;color:#4e6069;font-weight:400;letter-spacing:0.2px;"><span id="t61">charge</span></div>
<div class="t" style="left:1124.6px;top:615.81px;font-size:10.5px;line-height:10.5px;color:#546e7a;font-weight:400;transform:scaleX(0.9299);transform-origin:left 0;"><span id="t62" data-m="1">SELECTION</span></div>
<div class="a" style="left:1122px;top:628px;width:596px;height:63px;background:#cfd8dc;"></div>
<div class="t" style="left:820px;width:1200px;text-align:center;top:654.67px;font-size:12.2px;line-height:12.2px;color:#455a64;font-weight:400;transform:scaleX(0.8857);transform-origin:center 0;"><span id="t63" data-m="1">Hold SHIFT+LEFT CLICK and DRAG to make a selection</span></div>
<div class="a" style="left:1470.5px;top:612.5px;width:122px;height:13px;background:#ffffff;border:1px solid #e3e7ea;box-sizing:border-box;"></div>
<div class="t" style="left:931.5px;width:1200px;text-align:center;top:614.11px;font-size:10.5px;line-height:10.5px;color:#c3ccd1;font-weight:400;transform:scaleX(0.9218);transform-origin:center 0;"><span id="t64" data-m="1">ZOOM TO SELECTION</span></div>
<div class="a" style="left:1592px;top:612.5px;width:76px;height:13px;background:#ffffff;border:1px solid #7890a0;box-sizing:border-box;"></div>
<div class="t" style="left:1030px;width:1200px;text-align:center;top:614.11px;font-size:10.5px;line-height:10.5px;color:#37474f;font-weight:400;transform:scaleX(0.9104);transform-origin:center 0;"><span id="t65" data-m="1">SELECT ALL</span></div>
<div class="a" style="left:1668px;top:612.5px;width:50px;height:13px;background:#ffffff;border:1px solid #e3e7ea;box-sizing:border-box;"></div>
<div class="t" style="left:1093px;width:1200px;text-align:center;top:614.11px;font-size:10.5px;line-height:10.5px;color:#c3ccd1;font-weight:400;transform:scaleX(0.8891);transform-origin:center 0;"><span id="t66" data-m="1">CLEAR</span></div>
<div class="a" style="left:443px;top:746px;width:1306px;height:1px;background:#dfe4e7;"></div>
<div class="t" style="left:-119.5px;width:1200px;text-align:center;top:722.38px;font-size:15.5px;line-height:15.5px;color:#546e7a;font-weight:400;"><span id="t67">0</span></div>
<div class="t" style="left:-119.5px;width:1200px;text-align:center;top:756.98px;font-size:15.5px;line-height:15.5px;color:#546e7a;font-weight:400;"><span id="t68">1</span></div>
<div class="a" style="left:523px;top:723px;width:1183px;height:2px;background:#00a9ce;"></div>
<div class="a" style="left:523px;top:758px;width:1183px;height:2px;background:#00a9ce;"></div>
<div class="a" style="left:427px;top:797px;width:1339px;height:163px;overflow:hidden;">
<div class="t" style="left:11.100000000000023px;top:-1.52px;font-size:15.5px;line-height:15.5px;color:#8499a3;font-weight:400;transform:scaleX(0.9451);transform-origin:left 0;"><span id="t69" data-m="1">14:58:34.132</span></div>
<div class="t" style="left:116.5px;top:-1.52px;font-size:15.5px;line-height:15.5px;color:#8499a3;font-weight:400;transform:scaleX(0.8723);transform-origin:left 0;"><span id="t70" data-m="1">DUT OFF</span></div>
<div class="t" style="left:11.100000000000023px;top:19.46px;font-size:15.5px;line-height:15.5px;color:#8499a3;font-weight:400;transform:scaleX(0.9346);transform-origin:left 0;"><span id="t71" data-m="1">14:59:02.250</span></div>
<div class="t" style="left:116.5px;top:19.46px;font-size:15.5px;line-height:15.5px;color:#8499a3;font-weight:400;transform:scaleX(0.8983);transform-origin:left 0;"><span id="t72" data-m="1">DUT ON</span></div>
<div class="t" style="left:11.100000000000023px;top:40.44px;font-size:15.5px;line-height:15.5px;color:#8499a3;font-weight:400;transform:scaleX(0.9346);transform-origin:left 0;"><span id="t73" data-m="1">15:01:33.094</span></div>
<div class="t" style="left:116.5px;top:40.44px;font-size:15.5px;line-height:15.5px;color:#8499a3;font-weight:400;transform:scaleX(0.8723);transform-origin:left 0;"><span id="t74" data-m="1">DUT OFF</span></div>
<div class="t" style="left:11.100000000000023px;top:61.42px;font-size:15.5px;line-height:15.5px;color:#8499a3;font-weight:400;transform:scaleX(0.9346);transform-origin:left 0;"><span id="t75" data-m="1">15:01:38.454</span></div>
<div class="t" style="left:116.5px;top:61.42px;font-size:15.5px;line-height:15.5px;color:#8499a3;font-weight:400;transform:scaleX(0.9183);transform-origin:left 0;"><span id="t76" data-m="1">Device Connected SN:DC5475C4D0C8</span></div>
<div class="t" style="left:11.100000000000023px;top:82.40px;font-size:15.5px;line-height:15.5px;color:#8499a3;font-weight:400;transform:scaleX(0.9451);transform-origin:left 0;"><span id="t77" data-m="1">15:01:38.455</span></div>
<div class="t" style="left:116.5px;top:82.40px;font-size:15.5px;line-height:15.5px;color:#8499a3;font-weight:400;transform:scaleX(0.9474);transform-origin:left 0;"><span id="t78" data-m="1">Getting serialport options from persistent store DC5475C4D0C8.pc-nrfconnect-ppk</span></div>
<div class="t" style="left:11.100000000000023px;top:103.38px;font-size:15.5px;line-height:15.5px;color:#8499a3;font-weight:400;transform:scaleX(0.9451);transform-origin:left 0;"><span id="t79" data-m="1">15:01:38.847</span></div>
<div class="t" style="left:116.5px;top:103.38px;font-size:15.5px;line-height:15.5px;color:#8499a3;font-weight:400;transform:scaleX(0.9474);transform-origin:left 0;"><span id="t80" data-m="1">Getting serialport options from persistent store DC5475C4D0C8.pc-nrfconnect-ppk</span></div>
<div class="t" style="left:11.100000000000023px;top:124.36px;font-size:15.5px;line-height:15.5px;color:#8499a3;font-weight:400;transform:scaleX(0.9451);transform-origin:left 0;"><span id="t81" data-m="1">15:02:19.746</span></div>
<div class="t" style="left:116.5px;top:124.36px;font-size:15.5px;line-height:15.5px;color:#8499a3;font-weight:400;transform:scaleX(0.9231);transform-origin:left 0;"><span id="t82" data-m="1">Device Disconnected SN:DC5475C4D0C8</span></div>
<div class="t" style="left:11.100000000000023px;top:145.34px;font-size:15.5px;line-height:15.5px;color:#8499a3;font-weight:400;transform:scaleX(0.9346);transform-origin:left 0;"><span id="t83" data-m="1">15:02:21.990</span></div>
<div class="t" style="left:116.5px;top:145.34px;font-size:15.5px;line-height:15.5px;color:#8499a3;font-weight:400;transform:scaleX(0.8983);transform-origin:left 0;"><span id="t84" data-m="1">DUT ON</span></div>
</div>
<div class="a" style="left:1757px;top:905px;width:4px;height:50px;background:#56666e;border:1px solid #8e9ca3;border-radius:2px;box-sizing:border-box;"></div>
<div class="a" style="left:444px;top:966px;width:66px;height:22px;background:#455a64;"></div>
<div class="t" style="left:-123.25px;width:1200px;text-align:center;top:971.41px;font-size:10.5px;line-height:10.5px;color:#c3ccd1;font-weight:400;transform:scaleX(0.9010);transform-origin:center 0;"><span id="t85" data-m="1">CLEAR LOG</span></div>
<div class="a" style="left:518px;top:966px;width:86px;height:22px;background:#455a64;"></div>
<div class="t" style="left:-39.10000000000002px;width:1200px;text-align:center;top:971.41px;font-size:10.5px;line-height:10.5px;color:#c3ccd1;font-weight:400;transform:scaleX(0.9007);transform-origin:center 0;"><span id="t86" data-m="1">OPEN LOG FILE</span></div>
<div class="t" style="left:1509.2px;top:971.73px;font-size:11.3px;line-height:11.3px;color:#cfd8dc;font-weight:400;transform:scaleX(0.8441);transform-origin:left 0;"><span id="t87" data-m="1">AUTOSCROLL LOG</span></div>
<div class="a" style="left:1604px;top:969px;width:29px;height:17px;background:#00a9ce;border-radius:8.5px;"></div>
<div class="a" style="left:1618.0px;top:971px;width:13.0px;height:13.0px;background:#ffffff;border-radius:50%;"></div>
<div class="t" style="left:1659px;top:971.73px;font-size:11.3px;line-height:11.3px;color:#cfd8dc;font-weight:400;transform:scaleX(0.8525);transform-origin:left 0;"><span id="t88" data-m="1">SHOW LOG</span></div>
<div class="a" style="left:1720px;top:969px;width:29px;height:17px;background:#00a9ce;border-radius:8.5px;"></div>
<div class="a" style="left:1734.0px;top:971px;width:13.0px;height:13.0px;background:#ffffff;border-radius:50%;"></div>
</body></html>
